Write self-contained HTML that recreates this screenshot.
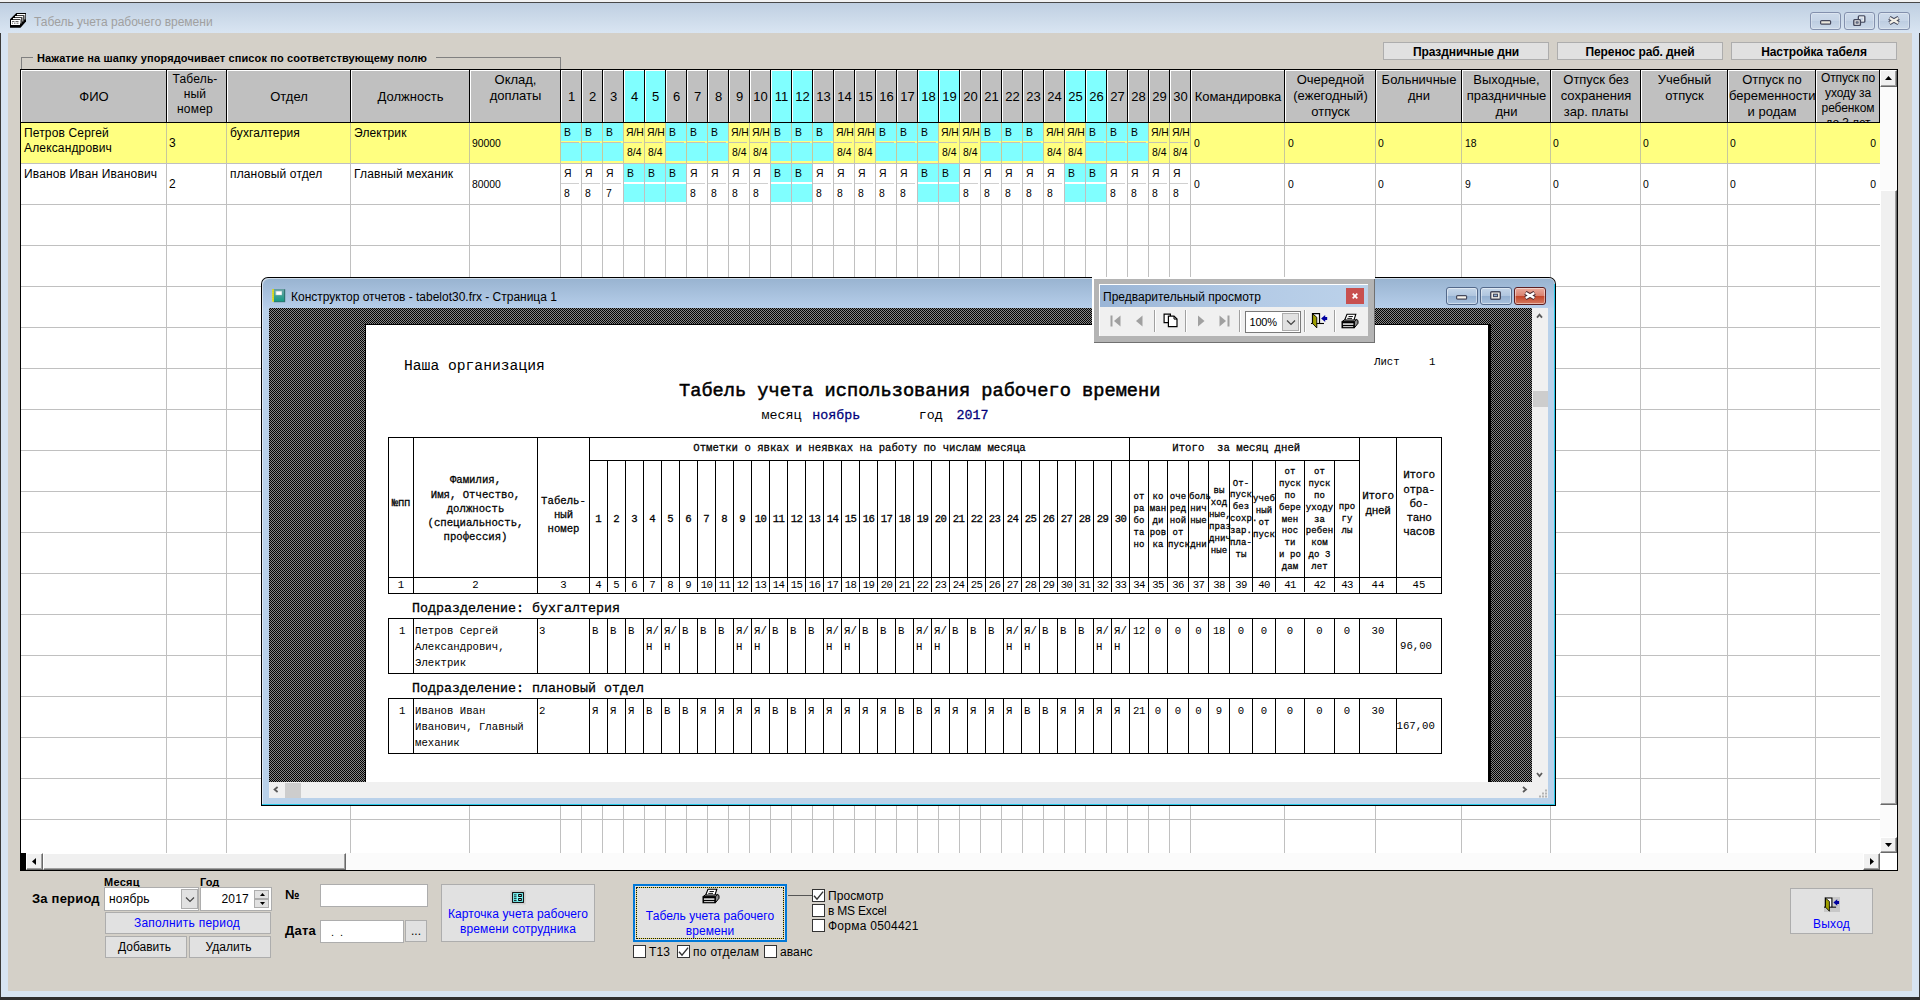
<!DOCTYPE html><html lang="ru"><head><meta charset="utf-8"><title>Табель учета рабочего времени</title><style>
*{box-sizing:border-box}
html,body{margin:0;padding:0}
body{width:1920px;height:1000px;position:relative;overflow:hidden;background:#d4d0c8;font-family:"Liberation Sans",sans-serif;font-size:12px;color:#000}
div,span,svg{position:absolute}
.t{white-space:nowrap;line-height:1}
.hd{background:#c0c0c0;border-left:1px solid #fff;border-top:1px solid #fff;text-align:center;font-size:13px;line-height:16px;overflow:hidden}
.hd span{position:static}
.cy{background:#80ffff}
.c{font-size:10.4px;white-space:nowrap;line-height:12px;margin-top:0.700px}
.c12{font-size:12px;white-space:nowrap;line-height:15px;letter-spacing:0.15px}
.btn{background:#e1e1e1;border:1px solid #adadad;text-align:center;font-size:12px}
.bl{color:#0000ff}
.cb{background:#fff;border:1px solid #333;width:13px;height:13px}
.m{font-family:"Liberation Mono",monospace;white-space:pre;line-height:1}
.m8{font-size:10.67px}
.m10{font-size:13.33px}
.b{font-weight:bold}
.m.b{font-weight:normal;-webkit-text-stroke-width:0.27px}
.ln{background:#000}
</style></head><body>
<div style="left:0px;top:0px;width:1920px;height:2px;background:#f2f2f2"></div>
<div style="left:0px;top:2px;width:1920px;height:1px;background:#484848"></div>
<div style="left:0px;top:3px;width:1920px;height:30px;background:linear-gradient(#bfcfe1,#d9e5f2)"></div>
<div style="left:0px;top:33px;width:1920px;height:967px;background:#d7e4f2"></div>
<div style="left:0px;top:33px;width:1px;height:967px;background:#3a3a3a"></div>
<div style="left:1919px;top:33px;width:1px;height:967px;background:#3a3a3a"></div>
<div style="left:0px;top:997px;width:1920px;height:3px;background:#2f2f2f"></div>
<div style="left:8px;top:33px;width:1904px;height:958px;background:#d4d0c8"></div>
<svg style="left:10px;top:13px" width="17" height="16" viewBox="0 0 17 16"><path d="M0 6.200L6.300 0H16V8.500L10.500 14.800H0z" fill="#000"/><path d="M7 0.900h8.300v5.600h-0.900v-4.200h-7.400z" fill="#fff"/><path d="M5 2.900h8.300v5.600h-0.900v-4.200h-7.400z" fill="#fff"/><path d="M3 4.900h8.300v5.600h-0.900v-4.200h-7.400z" fill="#fff"/><rect x="1" y="7" width="9" height="5" fill="#fff"/><path d="M2 8.500h2.500M5.500 8.500h3M2 10.200h1M4 10.200h1.500M6.500 10.200h2" stroke="#444" stroke-width="0.800"/></svg>
<span class="t" style="left:34px;top:16px;font-size:12px;color:#a0a0a0;letter-spacing:0px">Табель учета рабочего времени</span>
<div style="left:1810px;top:12px;width:31px;height:18px;border:1px solid #8390ad;border-radius:3px;background:linear-gradient(#cddaea,#c6d4e6 48%,#bdcde1 52%,#ccd9e9);box-shadow:inset 0 0 0 1px rgba(255,255,255,.3)"><svg style="left:9px;top:7px" width="12" height="6"><rect x="0.600" y="0.600" width="10" height="3.600" rx="1" fill="#ebe7dc" stroke="#44485c" stroke-width="1.200"/></svg></div>
<div style="left:1844px;top:12px;width:31px;height:18px;border:1px solid #8390ad;border-radius:3px;background:linear-gradient(#cddaea,#c6d4e6 48%,#bdcde1 52%,#ccd9e9);box-shadow:inset 0 0 0 1px rgba(255,255,255,.3)"><svg style="left:8px;top:2px" width="14" height="12"><rect x="5.400" y="0.900" width="6.400" height="6.200" rx="0.800" fill="#c6d4e6" stroke="#44485c" stroke-width="1.400"/><rect x="6.600" y="2.100" width="4" height="3.800" fill="none" stroke="#eee" stroke-width="1"/><rect x="0.800" y="4.600" width="6.600" height="5.800" rx="0.800" fill="#eee" stroke="#44485c" stroke-width="1.400"/><rect x="3" y="6.800" width="2.200" height="1.400" fill="#8fa0bc" stroke="#44485c" stroke-width="0.800"/></svg></div>
<div style="left:1878px;top:12px;width:32px;height:18px;border:1px solid #8390ad;border-radius:3px;background:linear-gradient(#cddaea,#c6d4e6 48%,#bdcde1 52%,#ccd9e9);box-shadow:inset 0 0 0 1px rgba(255,255,255,.3)"><svg style="left:9px;top:3px" width="13" height="10"><path d="M1.400 1.800L10.600 7.200M10.600 1.800L1.400 7.200" stroke="#44485c" stroke-width="4.300"/><path d="M1.700 2L10.300 7M10.300 2L1.700 7" stroke="#f2efe6" stroke-width="2.300"/></svg></div>
<div class="btn" style="left:1383px;top:42px;width:166px;height:18px;line-height:18.600px;overflow:hidden;font-weight:bold;font-size:12px;letter-spacing:-0.1px">Праздничные дни</div>
<div class="btn" style="left:1557px;top:42px;width:166px;height:18px;line-height:18.600px;overflow:hidden;font-weight:bold;font-size:12px;letter-spacing:-0.1px">Перенос раб. дней</div>
<div class="btn" style="left:1731px;top:42px;width:166px;height:18px;line-height:18.600px;overflow:hidden;font-weight:bold;font-size:12px;letter-spacing:-0.1px">Настройка табеля</div>
<div style="left:21px;top:57px;width:540px;height:14px;border:1px solid #808080;border-bottom:none"></div>
<span class="t" style="left:33px;top:52px;background:#d4d0c8;padding:0 9px 0 4px;font-size:11px;font-weight:bold;letter-spacing:0.11px;line-height:12px">Нажатие на шапку упорядочивает список по соответствующему полю</span>
<div style="left:20px;top:69px;width:1878px;height:802px;background:#000"></div>
<div style="left:21px;top:70px;width:1876px;height:800px;background:#fff"></div>
<div style="left:21px;top:70px;width:1859px;height:53px;background:#000"></div>
<div class="hd" style="left:21px;top:70px;width:145px;height:52px;padding-top:18px">ФИО</div>
<div class="hd" style="left:167px;top:70px;width:59px;height:52px;font-size:12px;line-height:15px;letter-spacing:0.2px;padding-right:4px;padding-top:1px">Табель-<br>ный<br>номер</div>
<div class="hd" style="left:227px;top:70px;width:123px;height:52px;padding-top:18px">Отдел</div>
<div class="hd" style="left:351px;top:70px;width:118px;height:52px;padding-top:18px">Должность</div>
<div class="hd" style="left:470px;top:70px;width:90px;height:52px;padding-top:1px">Оклад,<br>доплаты</div>
<div class="hd" style="left:561px;top:70px;width:20px;height:52px;padding-top:18px">1</div>
<div class="hd" style="left:582px;top:70px;width:20px;height:52px;padding-top:18px">2</div>
<div class="hd" style="left:603px;top:70px;width:20px;height:52px;padding-top:18px">3</div>
<div class="hd" style="left:624px;top:70px;width:20px;height:52px;background:#80ffff;padding-top:18px">4</div>
<div class="hd" style="left:645px;top:70px;width:20px;height:52px;background:#80ffff;padding-top:18px">5</div>
<div class="hd" style="left:666px;top:70px;width:20px;height:52px;padding-top:18px">6</div>
<div class="hd" style="left:687px;top:70px;width:20px;height:52px;padding-top:18px">7</div>
<div class="hd" style="left:708px;top:70px;width:20px;height:52px;padding-top:18px">8</div>
<div class="hd" style="left:729px;top:70px;width:20px;height:52px;padding-top:18px">9</div>
<div class="hd" style="left:750px;top:70px;width:20px;height:52px;padding-top:18px">10</div>
<div class="hd" style="left:771px;top:70px;width:20px;height:52px;background:#80ffff;padding-top:18px">11</div>
<div class="hd" style="left:792px;top:70px;width:20px;height:52px;background:#80ffff;padding-top:18px">12</div>
<div class="hd" style="left:813px;top:70px;width:20px;height:52px;padding-top:18px">13</div>
<div class="hd" style="left:834px;top:70px;width:20px;height:52px;padding-top:18px">14</div>
<div class="hd" style="left:855px;top:70px;width:20px;height:52px;padding-top:18px">15</div>
<div class="hd" style="left:876px;top:70px;width:20px;height:52px;padding-top:18px">16</div>
<div class="hd" style="left:897px;top:70px;width:20px;height:52px;padding-top:18px">17</div>
<div class="hd" style="left:918px;top:70px;width:20px;height:52px;background:#80ffff;padding-top:18px">18</div>
<div class="hd" style="left:939px;top:70px;width:20px;height:52px;background:#80ffff;padding-top:18px">19</div>
<div class="hd" style="left:960px;top:70px;width:20px;height:52px;padding-top:18px">20</div>
<div class="hd" style="left:981px;top:70px;width:20px;height:52px;padding-top:18px">21</div>
<div class="hd" style="left:1002px;top:70px;width:20px;height:52px;padding-top:18px">22</div>
<div class="hd" style="left:1023px;top:70px;width:20px;height:52px;padding-top:18px">23</div>
<div class="hd" style="left:1044px;top:70px;width:20px;height:52px;padding-top:18px">24</div>
<div class="hd" style="left:1065px;top:70px;width:20px;height:52px;background:#80ffff;padding-top:18px">25</div>
<div class="hd" style="left:1086px;top:70px;width:20px;height:52px;background:#80ffff;padding-top:18px">26</div>
<div class="hd" style="left:1107px;top:70px;width:20px;height:52px;padding-top:18px">27</div>
<div class="hd" style="left:1128px;top:70px;width:20px;height:52px;padding-top:18px">28</div>
<div class="hd" style="left:1149px;top:70px;width:20px;height:52px;padding-top:18px">29</div>
<div class="hd" style="left:1170px;top:70px;width:20px;height:52px;padding-top:18px">30</div>
<div class="hd" style="left:1191px;top:70px;width:93px;height:52px;letter-spacing:-0.1px;padding-top:18px">Командировка</div>
<div class="hd" style="left:1285px;top:70px;width:90px;height:52px;padding-top:1px">Очередной<br>(ежегодный)<br>отпуск</div>
<div class="hd" style="left:1376px;top:70px;width:85px;height:52px;padding-top:1px">Больничные<br>дни</div>
<div class="hd" style="left:1462px;top:70px;width:88px;height:52px;padding-top:1px">Выходные,<br>праздничные<br>дни</div>
<div class="hd" style="left:1551px;top:70px;width:89px;height:52px;padding-top:1px">Отпуск без<br>сохранения<br>зар. платы</div>
<div class="hd" style="left:1641px;top:70px;width:86px;height:52px;padding-top:1px">Учебный<br>отпуск</div>
<div class="hd" style="left:1728px;top:70px;width:87px;height:52px;padding-top:1px">Отпуск по<br>беременности<br>и родам</div>
<div class="hd" style="left:1816px;top:70px;width:63px;height:52px;font-size:12px;line-height:15px;letter-spacing:-0.1px;padding-top:0px">Отпуск по<br>уходу за<br>ребенком<br>до 3 лет</div>
<div style="left:166px;top:123px;width:1px;height:730px;background:#c0c0c0"></div>
<div style="left:226px;top:123px;width:1px;height:730px;background:#c0c0c0"></div>
<div style="left:350px;top:123px;width:1px;height:730px;background:#c0c0c0"></div>
<div style="left:469px;top:123px;width:1px;height:730px;background:#c0c0c0"></div>
<div style="left:560px;top:123px;width:1px;height:730px;background:#c0c0c0"></div>
<div style="left:581px;top:123px;width:1px;height:730px;background:#c0c0c0"></div>
<div style="left:602px;top:123px;width:1px;height:730px;background:#c0c0c0"></div>
<div style="left:623px;top:123px;width:1px;height:730px;background:#c0c0c0"></div>
<div style="left:644px;top:123px;width:1px;height:730px;background:#c0c0c0"></div>
<div style="left:665px;top:123px;width:1px;height:730px;background:#c0c0c0"></div>
<div style="left:686px;top:123px;width:1px;height:730px;background:#c0c0c0"></div>
<div style="left:707px;top:123px;width:1px;height:730px;background:#c0c0c0"></div>
<div style="left:728px;top:123px;width:1px;height:730px;background:#c0c0c0"></div>
<div style="left:749px;top:123px;width:1px;height:730px;background:#c0c0c0"></div>
<div style="left:770px;top:123px;width:1px;height:730px;background:#c0c0c0"></div>
<div style="left:791px;top:123px;width:1px;height:730px;background:#c0c0c0"></div>
<div style="left:812px;top:123px;width:1px;height:730px;background:#c0c0c0"></div>
<div style="left:833px;top:123px;width:1px;height:730px;background:#c0c0c0"></div>
<div style="left:854px;top:123px;width:1px;height:730px;background:#c0c0c0"></div>
<div style="left:875px;top:123px;width:1px;height:730px;background:#c0c0c0"></div>
<div style="left:896px;top:123px;width:1px;height:730px;background:#c0c0c0"></div>
<div style="left:917px;top:123px;width:1px;height:730px;background:#c0c0c0"></div>
<div style="left:938px;top:123px;width:1px;height:730px;background:#c0c0c0"></div>
<div style="left:959px;top:123px;width:1px;height:730px;background:#c0c0c0"></div>
<div style="left:980px;top:123px;width:1px;height:730px;background:#c0c0c0"></div>
<div style="left:1001px;top:123px;width:1px;height:730px;background:#c0c0c0"></div>
<div style="left:1022px;top:123px;width:1px;height:730px;background:#c0c0c0"></div>
<div style="left:1043px;top:123px;width:1px;height:730px;background:#c0c0c0"></div>
<div style="left:1064px;top:123px;width:1px;height:730px;background:#c0c0c0"></div>
<div style="left:1085px;top:123px;width:1px;height:730px;background:#c0c0c0"></div>
<div style="left:1106px;top:123px;width:1px;height:730px;background:#c0c0c0"></div>
<div style="left:1127px;top:123px;width:1px;height:730px;background:#c0c0c0"></div>
<div style="left:1148px;top:123px;width:1px;height:730px;background:#c0c0c0"></div>
<div style="left:1169px;top:123px;width:1px;height:730px;background:#c0c0c0"></div>
<div style="left:1190px;top:123px;width:1px;height:730px;background:#c0c0c0"></div>
<div style="left:1284px;top:123px;width:1px;height:730px;background:#c0c0c0"></div>
<div style="left:1375px;top:123px;width:1px;height:730px;background:#c0c0c0"></div>
<div style="left:1461px;top:123px;width:1px;height:730px;background:#c0c0c0"></div>
<div style="left:1550px;top:123px;width:1px;height:730px;background:#c0c0c0"></div>
<div style="left:1640px;top:123px;width:1px;height:730px;background:#c0c0c0"></div>
<div style="left:1727px;top:123px;width:1px;height:730px;background:#c0c0c0"></div>
<div style="left:1815px;top:123px;width:1px;height:730px;background:#c0c0c0"></div>
<div style="left:21px;top:163px;width:1859px;height:1px;background:#c0c0c0"></div>
<div style="left:21px;top:204px;width:1859px;height:1px;background:#c0c0c0"></div>
<div style="left:21px;top:245px;width:1859px;height:1px;background:#c0c0c0"></div>
<div style="left:21px;top:286px;width:1859px;height:1px;background:#c0c0c0"></div>
<div style="left:21px;top:327px;width:1859px;height:1px;background:#c0c0c0"></div>
<div style="left:21px;top:368px;width:1859px;height:1px;background:#c0c0c0"></div>
<div style="left:21px;top:409px;width:1859px;height:1px;background:#c0c0c0"></div>
<div style="left:21px;top:450px;width:1859px;height:1px;background:#c0c0c0"></div>
<div style="left:21px;top:491px;width:1859px;height:1px;background:#c0c0c0"></div>
<div style="left:21px;top:532px;width:1859px;height:1px;background:#c0c0c0"></div>
<div style="left:21px;top:573px;width:1859px;height:1px;background:#c0c0c0"></div>
<div style="left:21px;top:614px;width:1859px;height:1px;background:#c0c0c0"></div>
<div style="left:21px;top:655px;width:1859px;height:1px;background:#c0c0c0"></div>
<div style="left:21px;top:696px;width:1859px;height:1px;background:#c0c0c0"></div>
<div style="left:21px;top:737px;width:1859px;height:1px;background:#c0c0c0"></div>
<div style="left:21px;top:778px;width:1859px;height:1px;background:#c0c0c0"></div>
<div style="left:21px;top:819px;width:1859px;height:1px;background:#c0c0c0"></div>
<div style="left:21px;top:123px;width:1859px;height:40px;background:#ffff80"></div>
<div style="left:166px;top:123px;width:1px;height:40px;background:#c8c89a"></div>
<div style="left:226px;top:123px;width:1px;height:40px;background:#c8c89a"></div>
<div style="left:350px;top:123px;width:1px;height:40px;background:#c8c89a"></div>
<div style="left:469px;top:123px;width:1px;height:40px;background:#c8c89a"></div>
<div style="left:560px;top:123px;width:1px;height:40px;background:#c8c89a"></div>
<div style="left:581px;top:123px;width:1px;height:40px;background:#c8c89a"></div>
<div style="left:602px;top:123px;width:1px;height:40px;background:#c8c89a"></div>
<div style="left:623px;top:123px;width:1px;height:40px;background:#c8c89a"></div>
<div style="left:644px;top:123px;width:1px;height:40px;background:#c8c89a"></div>
<div style="left:665px;top:123px;width:1px;height:40px;background:#c8c89a"></div>
<div style="left:686px;top:123px;width:1px;height:40px;background:#c8c89a"></div>
<div style="left:707px;top:123px;width:1px;height:40px;background:#c8c89a"></div>
<div style="left:728px;top:123px;width:1px;height:40px;background:#c8c89a"></div>
<div style="left:749px;top:123px;width:1px;height:40px;background:#c8c89a"></div>
<div style="left:770px;top:123px;width:1px;height:40px;background:#c8c89a"></div>
<div style="left:791px;top:123px;width:1px;height:40px;background:#c8c89a"></div>
<div style="left:812px;top:123px;width:1px;height:40px;background:#c8c89a"></div>
<div style="left:833px;top:123px;width:1px;height:40px;background:#c8c89a"></div>
<div style="left:854px;top:123px;width:1px;height:40px;background:#c8c89a"></div>
<div style="left:875px;top:123px;width:1px;height:40px;background:#c8c89a"></div>
<div style="left:896px;top:123px;width:1px;height:40px;background:#c8c89a"></div>
<div style="left:917px;top:123px;width:1px;height:40px;background:#c8c89a"></div>
<div style="left:938px;top:123px;width:1px;height:40px;background:#c8c89a"></div>
<div style="left:959px;top:123px;width:1px;height:40px;background:#c8c89a"></div>
<div style="left:980px;top:123px;width:1px;height:40px;background:#c8c89a"></div>
<div style="left:1001px;top:123px;width:1px;height:40px;background:#c8c89a"></div>
<div style="left:1022px;top:123px;width:1px;height:40px;background:#c8c89a"></div>
<div style="left:1043px;top:123px;width:1px;height:40px;background:#c8c89a"></div>
<div style="left:1064px;top:123px;width:1px;height:40px;background:#c8c89a"></div>
<div style="left:1085px;top:123px;width:1px;height:40px;background:#c8c89a"></div>
<div style="left:1106px;top:123px;width:1px;height:40px;background:#c8c89a"></div>
<div style="left:1127px;top:123px;width:1px;height:40px;background:#c8c89a"></div>
<div style="left:1148px;top:123px;width:1px;height:40px;background:#c8c89a"></div>
<div style="left:1169px;top:123px;width:1px;height:40px;background:#c8c89a"></div>
<div style="left:1190px;top:123px;width:1px;height:40px;background:#c8c89a"></div>
<div style="left:1284px;top:123px;width:1px;height:40px;background:#c8c89a"></div>
<div style="left:1375px;top:123px;width:1px;height:40px;background:#c8c89a"></div>
<div style="left:1461px;top:123px;width:1px;height:40px;background:#c8c89a"></div>
<div style="left:1550px;top:123px;width:1px;height:40px;background:#c8c89a"></div>
<div style="left:1640px;top:123px;width:1px;height:40px;background:#c8c89a"></div>
<div style="left:1727px;top:123px;width:1px;height:40px;background:#c8c89a"></div>
<div style="left:1815px;top:123px;width:1px;height:40px;background:#c8c89a"></div>
<div style="left:561px;top:123px;width:20px;height:18px;background:#80ffff"></div>
<div style="left:561px;top:143px;width:20px;height:18px;background:#80ffff"></div>
<div style="left:561px;top:142px;width:18px;height:1px;background:#c4c4b4"></div>
<span class="c" style="left:564px;top:126px;">В</span>
<div style="left:582px;top:123px;width:20px;height:18px;background:#80ffff"></div>
<div style="left:582px;top:143px;width:20px;height:18px;background:#80ffff"></div>
<div style="left:582px;top:142px;width:18px;height:1px;background:#c4c4b4"></div>
<span class="c" style="left:585px;top:126px;">В</span>
<div style="left:603px;top:123px;width:20px;height:18px;background:#80ffff"></div>
<div style="left:603px;top:143px;width:20px;height:18px;background:#80ffff"></div>
<div style="left:603px;top:142px;width:18px;height:1px;background:#c4c4b4"></div>
<span class="c" style="left:606px;top:126px;">В</span>
<div style="left:624px;top:142px;width:18px;height:1px;background:#c4c4b4"></div>
<span class="c" style="left:626px;top:126px;letter-spacing:-0.1px;">Я/Н</span>
<span class="c" style="left:627px;top:146px;">8/4</span>
<div style="left:645px;top:142px;width:18px;height:1px;background:#c4c4b4"></div>
<span class="c" style="left:647px;top:126px;letter-spacing:-0.1px;">Я/Н</span>
<span class="c" style="left:648px;top:146px;">8/4</span>
<div style="left:666px;top:123px;width:20px;height:18px;background:#80ffff"></div>
<div style="left:666px;top:143px;width:20px;height:18px;background:#80ffff"></div>
<div style="left:666px;top:142px;width:18px;height:1px;background:#c4c4b4"></div>
<span class="c" style="left:669px;top:126px;">В</span>
<div style="left:687px;top:123px;width:20px;height:18px;background:#80ffff"></div>
<div style="left:687px;top:143px;width:20px;height:18px;background:#80ffff"></div>
<div style="left:687px;top:142px;width:18px;height:1px;background:#c4c4b4"></div>
<span class="c" style="left:690px;top:126px;">В</span>
<div style="left:708px;top:123px;width:20px;height:18px;background:#80ffff"></div>
<div style="left:708px;top:143px;width:20px;height:18px;background:#80ffff"></div>
<div style="left:708px;top:142px;width:18px;height:1px;background:#c4c4b4"></div>
<span class="c" style="left:711px;top:126px;">В</span>
<div style="left:729px;top:142px;width:18px;height:1px;background:#c4c4b4"></div>
<span class="c" style="left:731px;top:126px;letter-spacing:-0.1px;">Я/Н</span>
<span class="c" style="left:732px;top:146px;">8/4</span>
<div style="left:750px;top:142px;width:18px;height:1px;background:#c4c4b4"></div>
<span class="c" style="left:752px;top:126px;letter-spacing:-0.1px;">Я/Н</span>
<span class="c" style="left:753px;top:146px;">8/4</span>
<div style="left:771px;top:123px;width:20px;height:18px;background:#80ffff"></div>
<div style="left:771px;top:143px;width:20px;height:18px;background:#80ffff"></div>
<div style="left:771px;top:142px;width:18px;height:1px;background:#c4c4b4"></div>
<span class="c" style="left:774px;top:126px;">В</span>
<div style="left:792px;top:123px;width:20px;height:18px;background:#80ffff"></div>
<div style="left:792px;top:143px;width:20px;height:18px;background:#80ffff"></div>
<div style="left:792px;top:142px;width:18px;height:1px;background:#c4c4b4"></div>
<span class="c" style="left:795px;top:126px;">В</span>
<div style="left:813px;top:123px;width:20px;height:18px;background:#80ffff"></div>
<div style="left:813px;top:143px;width:20px;height:18px;background:#80ffff"></div>
<div style="left:813px;top:142px;width:18px;height:1px;background:#c4c4b4"></div>
<span class="c" style="left:816px;top:126px;">В</span>
<div style="left:834px;top:142px;width:18px;height:1px;background:#c4c4b4"></div>
<span class="c" style="left:836px;top:126px;letter-spacing:-0.1px;">Я/Н</span>
<span class="c" style="left:837px;top:146px;">8/4</span>
<div style="left:855px;top:142px;width:18px;height:1px;background:#c4c4b4"></div>
<span class="c" style="left:857px;top:126px;letter-spacing:-0.1px;">Я/Н</span>
<span class="c" style="left:858px;top:146px;">8/4</span>
<div style="left:876px;top:123px;width:20px;height:18px;background:#80ffff"></div>
<div style="left:876px;top:143px;width:20px;height:18px;background:#80ffff"></div>
<div style="left:876px;top:142px;width:18px;height:1px;background:#c4c4b4"></div>
<span class="c" style="left:879px;top:126px;">В</span>
<div style="left:897px;top:123px;width:20px;height:18px;background:#80ffff"></div>
<div style="left:897px;top:143px;width:20px;height:18px;background:#80ffff"></div>
<div style="left:897px;top:142px;width:18px;height:1px;background:#c4c4b4"></div>
<span class="c" style="left:900px;top:126px;">В</span>
<div style="left:918px;top:123px;width:20px;height:18px;background:#80ffff"></div>
<div style="left:918px;top:143px;width:20px;height:18px;background:#80ffff"></div>
<div style="left:918px;top:142px;width:18px;height:1px;background:#c4c4b4"></div>
<span class="c" style="left:921px;top:126px;">В</span>
<div style="left:939px;top:142px;width:18px;height:1px;background:#c4c4b4"></div>
<span class="c" style="left:941px;top:126px;letter-spacing:-0.1px;">Я/Н</span>
<span class="c" style="left:942px;top:146px;">8/4</span>
<div style="left:960px;top:142px;width:18px;height:1px;background:#c4c4b4"></div>
<span class="c" style="left:962px;top:126px;letter-spacing:-0.1px;">Я/Н</span>
<span class="c" style="left:963px;top:146px;">8/4</span>
<div style="left:981px;top:123px;width:20px;height:18px;background:#80ffff"></div>
<div style="left:981px;top:143px;width:20px;height:18px;background:#80ffff"></div>
<div style="left:981px;top:142px;width:18px;height:1px;background:#c4c4b4"></div>
<span class="c" style="left:984px;top:126px;">В</span>
<div style="left:1002px;top:123px;width:20px;height:18px;background:#80ffff"></div>
<div style="left:1002px;top:143px;width:20px;height:18px;background:#80ffff"></div>
<div style="left:1002px;top:142px;width:18px;height:1px;background:#c4c4b4"></div>
<span class="c" style="left:1005px;top:126px;">В</span>
<div style="left:1023px;top:123px;width:20px;height:18px;background:#80ffff"></div>
<div style="left:1023px;top:143px;width:20px;height:18px;background:#80ffff"></div>
<div style="left:1023px;top:142px;width:18px;height:1px;background:#c4c4b4"></div>
<span class="c" style="left:1026px;top:126px;">В</span>
<div style="left:1044px;top:142px;width:18px;height:1px;background:#c4c4b4"></div>
<span class="c" style="left:1046px;top:126px;letter-spacing:-0.1px;">Я/Н</span>
<span class="c" style="left:1047px;top:146px;">8/4</span>
<div style="left:1065px;top:142px;width:18px;height:1px;background:#c4c4b4"></div>
<span class="c" style="left:1067px;top:126px;letter-spacing:-0.1px;">Я/Н</span>
<span class="c" style="left:1068px;top:146px;">8/4</span>
<div style="left:1086px;top:123px;width:20px;height:18px;background:#80ffff"></div>
<div style="left:1086px;top:143px;width:20px;height:18px;background:#80ffff"></div>
<div style="left:1086px;top:142px;width:18px;height:1px;background:#c4c4b4"></div>
<span class="c" style="left:1089px;top:126px;">В</span>
<div style="left:1107px;top:123px;width:20px;height:18px;background:#80ffff"></div>
<div style="left:1107px;top:143px;width:20px;height:18px;background:#80ffff"></div>
<div style="left:1107px;top:142px;width:18px;height:1px;background:#c4c4b4"></div>
<span class="c" style="left:1110px;top:126px;">В</span>
<div style="left:1128px;top:123px;width:20px;height:18px;background:#80ffff"></div>
<div style="left:1128px;top:143px;width:20px;height:18px;background:#80ffff"></div>
<div style="left:1128px;top:142px;width:18px;height:1px;background:#c4c4b4"></div>
<span class="c" style="left:1131px;top:126px;">В</span>
<div style="left:1149px;top:142px;width:18px;height:1px;background:#c4c4b4"></div>
<span class="c" style="left:1151px;top:126px;letter-spacing:-0.1px;">Я/Н</span>
<span class="c" style="left:1152px;top:146px;">8/4</span>
<div style="left:1170px;top:142px;width:18px;height:1px;background:#c4c4b4"></div>
<span class="c" style="left:1172px;top:126px;letter-spacing:-0.1px;">Я/Н</span>
<span class="c" style="left:1173px;top:146px;">8/4</span>
<div style="left:561px;top:183px;width:18px;height:1px;background:#d0d0d0"></div>
<span class="c" style="left:564px;top:167px;">Я</span>
<span class="c" style="left:564px;top:187px;">8</span>
<div style="left:582px;top:183px;width:18px;height:1px;background:#d0d0d0"></div>
<span class="c" style="left:585px;top:167px;">Я</span>
<span class="c" style="left:585px;top:187px;">8</span>
<div style="left:603px;top:183px;width:18px;height:1px;background:#d0d0d0"></div>
<span class="c" style="left:606px;top:167px;">Я</span>
<span class="c" style="left:606px;top:187px;">7</span>
<div style="left:624px;top:164px;width:20px;height:18px;background:#80ffff"></div>
<div style="left:624px;top:184px;width:20px;height:18px;background:#80ffff"></div>
<span class="c" style="left:627px;top:167px;">В</span>
<div style="left:645px;top:164px;width:20px;height:18px;background:#80ffff"></div>
<div style="left:645px;top:184px;width:20px;height:18px;background:#80ffff"></div>
<span class="c" style="left:648px;top:167px;">В</span>
<div style="left:666px;top:164px;width:20px;height:18px;background:#80ffff"></div>
<div style="left:666px;top:184px;width:20px;height:18px;background:#80ffff"></div>
<span class="c" style="left:669px;top:167px;">В</span>
<div style="left:687px;top:183px;width:18px;height:1px;background:#d0d0d0"></div>
<span class="c" style="left:690px;top:167px;">Я</span>
<span class="c" style="left:690px;top:187px;">8</span>
<div style="left:708px;top:183px;width:18px;height:1px;background:#d0d0d0"></div>
<span class="c" style="left:711px;top:167px;">Я</span>
<span class="c" style="left:711px;top:187px;">8</span>
<div style="left:729px;top:183px;width:18px;height:1px;background:#d0d0d0"></div>
<span class="c" style="left:732px;top:167px;">Я</span>
<span class="c" style="left:732px;top:187px;">8</span>
<div style="left:750px;top:183px;width:18px;height:1px;background:#d0d0d0"></div>
<span class="c" style="left:753px;top:167px;">Я</span>
<span class="c" style="left:753px;top:187px;">8</span>
<div style="left:771px;top:164px;width:20px;height:18px;background:#80ffff"></div>
<div style="left:771px;top:184px;width:20px;height:18px;background:#80ffff"></div>
<span class="c" style="left:774px;top:167px;">В</span>
<div style="left:792px;top:164px;width:20px;height:18px;background:#80ffff"></div>
<div style="left:792px;top:184px;width:20px;height:18px;background:#80ffff"></div>
<span class="c" style="left:795px;top:167px;">В</span>
<div style="left:813px;top:183px;width:18px;height:1px;background:#d0d0d0"></div>
<span class="c" style="left:816px;top:167px;">Я</span>
<span class="c" style="left:816px;top:187px;">8</span>
<div style="left:834px;top:183px;width:18px;height:1px;background:#d0d0d0"></div>
<span class="c" style="left:837px;top:167px;">Я</span>
<span class="c" style="left:837px;top:187px;">8</span>
<div style="left:855px;top:183px;width:18px;height:1px;background:#d0d0d0"></div>
<span class="c" style="left:858px;top:167px;">Я</span>
<span class="c" style="left:858px;top:187px;">8</span>
<div style="left:876px;top:183px;width:18px;height:1px;background:#d0d0d0"></div>
<span class="c" style="left:879px;top:167px;">Я</span>
<span class="c" style="left:879px;top:187px;">8</span>
<div style="left:897px;top:183px;width:18px;height:1px;background:#d0d0d0"></div>
<span class="c" style="left:900px;top:167px;">Я</span>
<span class="c" style="left:900px;top:187px;">8</span>
<div style="left:918px;top:164px;width:20px;height:18px;background:#80ffff"></div>
<div style="left:918px;top:184px;width:20px;height:18px;background:#80ffff"></div>
<span class="c" style="left:921px;top:167px;">В</span>
<div style="left:939px;top:164px;width:20px;height:18px;background:#80ffff"></div>
<div style="left:939px;top:184px;width:20px;height:18px;background:#80ffff"></div>
<span class="c" style="left:942px;top:167px;">В</span>
<div style="left:960px;top:183px;width:18px;height:1px;background:#d0d0d0"></div>
<span class="c" style="left:963px;top:167px;">Я</span>
<span class="c" style="left:963px;top:187px;">8</span>
<div style="left:981px;top:183px;width:18px;height:1px;background:#d0d0d0"></div>
<span class="c" style="left:984px;top:167px;">Я</span>
<span class="c" style="left:984px;top:187px;">8</span>
<div style="left:1002px;top:183px;width:18px;height:1px;background:#d0d0d0"></div>
<span class="c" style="left:1005px;top:167px;">Я</span>
<span class="c" style="left:1005px;top:187px;">8</span>
<div style="left:1023px;top:183px;width:18px;height:1px;background:#d0d0d0"></div>
<span class="c" style="left:1026px;top:167px;">Я</span>
<span class="c" style="left:1026px;top:187px;">8</span>
<div style="left:1044px;top:183px;width:18px;height:1px;background:#d0d0d0"></div>
<span class="c" style="left:1047px;top:167px;">Я</span>
<span class="c" style="left:1047px;top:187px;">8</span>
<div style="left:1065px;top:164px;width:20px;height:18px;background:#80ffff"></div>
<div style="left:1065px;top:184px;width:20px;height:18px;background:#80ffff"></div>
<span class="c" style="left:1068px;top:167px;">В</span>
<div style="left:1086px;top:164px;width:20px;height:18px;background:#80ffff"></div>
<div style="left:1086px;top:184px;width:20px;height:18px;background:#80ffff"></div>
<span class="c" style="left:1089px;top:167px;">В</span>
<div style="left:1107px;top:183px;width:18px;height:1px;background:#d0d0d0"></div>
<span class="c" style="left:1110px;top:167px;">Я</span>
<span class="c" style="left:1110px;top:187px;">8</span>
<div style="left:1128px;top:183px;width:18px;height:1px;background:#d0d0d0"></div>
<span class="c" style="left:1131px;top:167px;">Я</span>
<span class="c" style="left:1131px;top:187px;">8</span>
<div style="left:1149px;top:183px;width:18px;height:1px;background:#d0d0d0"></div>
<span class="c" style="left:1152px;top:167px;">Я</span>
<span class="c" style="left:1152px;top:187px;">8</span>
<div style="left:1170px;top:183px;width:18px;height:1px;background:#d0d0d0"></div>
<span class="c" style="left:1173px;top:167px;">Я</span>
<span class="c" style="left:1173px;top:187px;">8</span>
<span class="c12" style="left:24px;top:126px;white-space:normal;width:140px">Петров Сергей Александрович</span>
<span class="c12" style="left:169px;top:136px">3</span>
<span class="c12" style="left:230px;top:126px">бухгалтерия</span>
<span class="c12" style="left:354px;top:126px">Электрик</span>
<span class="c" style="left:472px;top:137px">90000</span>
<span class="c" style="left:1194px;top:137px">0</span>
<span class="c" style="left:1288px;top:137px">0</span>
<span class="c" style="left:1378px;top:137px">0</span>
<span class="c" style="left:1465px;top:137px">18</span>
<span class="c" style="left:1553px;top:137px">0</span>
<span class="c" style="left:1643px;top:137px">0</span>
<span class="c" style="left:1730px;top:137px">0</span>
<span class="c" style="left:1866px;top:137px;width:10px;text-align:right">0</span>
<span class="c12" style="left:24px;top:167px;white-space:normal;width:140px">Иванов Иван Иванович</span>
<span class="c12" style="left:169px;top:177px">2</span>
<span class="c12" style="left:230px;top:167px">плановый отдел</span>
<span class="c12" style="left:354px;top:167px">Главный механик</span>
<span class="c" style="left:472px;top:178px">80000</span>
<span class="c" style="left:1194px;top:178px">0</span>
<span class="c" style="left:1288px;top:178px">0</span>
<span class="c" style="left:1378px;top:178px">0</span>
<span class="c" style="left:1465px;top:178px">9</span>
<span class="c" style="left:1553px;top:178px">0</span>
<span class="c" style="left:1643px;top:178px">0</span>
<span class="c" style="left:1730px;top:178px">0</span>
<span class="c" style="left:1866px;top:178px;width:10px;text-align:right">0</span>
<div style="left:1880px;top:70px;width:17px;height:783px;background:#fbfbfb"></div>
<div style="left:1880px;top:70px;width:17px;height:17px;background:#f0f0f0;border:1px solid #fff;border-right-color:#696969;border-bottom-color:#696969;box-shadow:inset -1px -1px 0 #a0a0a0"><svg style="left:4px;top:5px" width="7" height="4"><path d="M0 4L3.500 0L7 4z" fill="#000"/></svg></div>
<div style="left:1880px;top:190px;width:17px;height:615px;background:#f0f0f0;border:1px solid #fff;border-right-color:#696969;border-bottom-color:#696969;box-shadow:inset -1px -1px 0 #a0a0a0"></div>
<div style="left:1880px;top:837px;width:17px;height:16px;background:#f0f0f0;border:1px solid #fff;border-right-color:#696969;border-bottom-color:#696969;box-shadow:inset -1px -1px 0 #a0a0a0"><svg style="left:4px;top:5px" width="7" height="4"><path d="M0 0L3.500 4L7 0z" fill="#000"/></svg></div>
<div style="left:21px;top:853px;width:1859px;height:17px;background:#fbfbfb"></div>
<div style="left:20px;top:853px;width:6px;height:17px;background:#000"></div>
<div style="left:26px;top:853px;width:17px;height:17px;background:#f0f0f0;border:1px solid #fff;border-right-color:#696969;border-bottom-color:#696969;box-shadow:inset -1px -1px 0 #a0a0a0"><svg style="left:5px;top:4px" width="4" height="7"><path d="M4 0L0 3.500L4 7z" fill="#000"/></svg></div>
<div style="left:43px;top:853px;width:303px;height:17px;background:#f0f0f0;border:1px solid #fff;border-right-color:#696969;border-bottom-color:#696969;box-shadow:inset -1px -1px 0 #a0a0a0"></div>
<div style="left:1863px;top:853px;width:17px;height:17px;background:#f0f0f0;border:1px solid #fff;border-right-color:#696969;border-bottom-color:#696969;box-shadow:inset -1px -1px 0 #a0a0a0"><svg style="left:6px;top:4px" width="4" height="7"><path d="M0 0L4 3.500L0 7z" fill="#000"/></svg></div>
<div style="left:1880px;top:853px;width:17px;height:17px;background:#fff"></div>
<span class="t b" style="left:104px;top:877px;font-size:11px;letter-spacing:0.25px">Месяц</span>
<span class="t b" style="left:200px;top:877px;font-size:11px">Год</span>
<span class="t b" style="left:32px;top:892px;font-size:13px;letter-spacing:0.2px">За период</span>
<div style="left:104px;top:887px;width:95px;height:24px;background:#fff;border:1px solid #adadad"></div>
<span class="t" style="left:109px;top:893px;font-size:12px;letter-spacing:0.2px">ноябрь</span>
<div style="left:181px;top:889px;width:17px;height:20px;background:#e1e1e1;border:1px solid #adadad"><svg style="left:3px;top:6px" width="10" height="7"><path d="M1 1.500L5 5.500L9 1.500" fill="none" stroke="#444" stroke-width="1.200"/></svg></div>
<div style="left:200px;top:887px;width:72px;height:24px;background:#fff;border:1px solid #adadad"></div>
<span class="t" style="left:215px;top:893px;font-size:12px;width:34px;text-align:right;letter-spacing:0.2px">2017</span>
<div style="left:254px;top:890px;width:15px;height:9px;background:#e1e1e1;border:1px solid #adadad"><svg style="left:5px;top:2px" width="5" height="3"><path d="M0 3L2.500 0L5 3z" fill="#000"/></svg></div>
<div style="left:254px;top:899px;width:15px;height:9px;background:#e1e1e1;border:1px solid #adadad"><svg style="left:5px;top:2px" width="5" height="3"><path d="M0 0L2.500 3L5 0z" fill="#000"/></svg></div>
<div class="btn bl" style="left:105px;top:912px;width:166px;height:22px;line-height:20px;letter-spacing:0.25px;padding-right:2px">Заполнить период</div>
<div class="btn" style="left:105px;top:936px;width:82px;height:22px;line-height:20px;letter-spacing:0px;padding-right:3px">Добавить</div>
<div class="btn" style="left:189px;top:936px;width:82px;height:22px;line-height:20px;letter-spacing:0.05px;padding-right:3px">Удалить</div>
<span class="t b" style="left:285px;top:888px;font-size:13px">№</span>
<span class="t b" style="left:285px;top:924px;font-size:13px;letter-spacing:0.2px">Дата</span>
<div style="left:320px;top:884px;width:108px;height:23px;background:#fff;border:1px solid #adadad"></div>
<div style="left:320px;top:920px;width:84px;height:23px;background:#fff;border:1px solid #adadad"></div>
<span class="t" style="left:331px;top:927px;font-size:11px;letter-spacing:6px">..</span>
<div class="btn" style="left:405px;top:920px;width:22px;height:22px;line-height:20px">...</div>
<div class="btn" style="left:441px;top:884px;width:154px;height:58px;"></div>
<svg style="left:510px;top:890px" width="16" height="15" viewBox="0 0 16 15"><rect x="0.400" y="0.400" width="15.200" height="14.100" fill="#cdcdcd"/><rect x="2.100" y="2.100" width="11.800" height="10.800" fill="#000"/><rect x="3.100" y="3.100" width="9.800" height="8.800" fill="#80ffff"/><path d="M4 4.900h2.600M4 6.800h2.600M4 8.700h2.600M4 10.600h2.600" stroke="#000" stroke-width="0.900"/><rect x="8.200" y="4" width="3.600" height="2.900" rx="0.500" fill="#000"/><rect x="9.200" y="5" width="1.600" height="0.900" fill="#fff"/><rect x="8.200" y="8" width="3.600" height="2.900" rx="0.500" fill="#000"/><rect x="9.200" y="9" width="1.600" height="0.900" fill="#fff"/></svg>
<span class="bl" style="left:441px;top:906.700px;width:154px;text-align:center;font-size:12px;line-height:15px;letter-spacing:0.1px">Карточка учета рабочего<br>времени сотрудника</span>
<div style="left:633px;top:884px;width:154px;height:58px;background:#e1e1e1;border:2px solid #0078d7"></div>
<div style="left:636px;top:887px;width:148px;height:52px;border:1px solid #e6de50"></div>
<div style="left:636px;top:887px;width:148px;height:52px;border:1px dotted #111"></div>
<svg style="left:702px;top:888px" width="18" height="16" viewBox="0 0 18 16"><path d="M13.300 8.700L15.400 6.300L17 7.500v2.800l-3.700 4.600z" fill="#8c8c8c" stroke="#000" stroke-width="1"/><path d="M0.900 8.700L3.300 6.900H15.400L13.300 8.700z" fill="#f4f4f4" stroke="#000" stroke-width="1"/><rect x="0.500" y="8.300" width="13.200" height="7" fill="#000"/><rect x="1.900" y="10.300" width="10.500" height="1.600" fill="#e4e4e4"/><rect x="2.100" y="13.200" width="10.100" height="0.900" fill="#f4f4f4"/><path d="M3.700 7L6 1.200h8.800L13 7z" fill="#fff" stroke="#000" stroke-width="1.100"/><path d="M7.500 3.500h4.400M6.300 5.400h4.700" stroke="#000" stroke-width="0.900"/></svg>
<span class="bl" style="left:633px;top:908.700px;width:154px;text-align:center;font-size:12px;line-height:15px;letter-spacing:0.05px">Табель учета рабочего<br>времени</span>
<div style="left:788px;top:895px;width:24px;height:1px;background:#555"></div>
<div class="cb" style="left:812px;top:889px;width:13px;height:13px;"><svg style="left:0;top:0" width="11" height="11" viewBox="0 0 11 11"><path d="M1 5.800L4 9.200L10.100 1.600" fill="none" stroke="#333" stroke-width="1.400"/></svg></div>
<span class="t" style="left:828px;top:890px;font-size:12px;line-height:13px;letter-spacing:0.1px">Просмотр</span>
<div class="cb" style="left:812px;top:904px;width:13px;height:13px;"></div>
<span class="t" style="left:828px;top:905px;font-size:12px;line-height:13px;letter-spacing:-0.2px">в MS Excel</span>
<div class="cb" style="left:812px;top:919px;width:13px;height:13px;"></div>
<span class="t" style="left:828px;top:920px;font-size:12px;line-height:13px;letter-spacing:0.25px">Форма 0504421</span>
<div class="cb" style="left:633px;top:945px;width:13px;height:13px;"></div>
<span class="t" style="left:649px;top:946px;font-size:12px;line-height:13px;letter-spacing:0.1px">Т13</span>
<div class="cb" style="left:677px;top:945px;width:13px;height:13px;"><svg style="left:0;top:0" width="11" height="11" viewBox="0 0 11 11"><path d="M1 5.800L4 9.200L10.100 1.600" fill="none" stroke="#333" stroke-width="1.400"/></svg></div>
<span class="t" style="left:693px;top:946px;font-size:12px;line-height:13px;letter-spacing:0.3px">по отделам</span>
<div class="cb" style="left:764px;top:945px;width:13px;height:13px;"></div>
<span class="t" style="left:780px;top:946px;font-size:12px;line-height:13px;letter-spacing:0.1px">аванс</span>
<div class="btn" style="left:1790px;top:888px;width:83px;height:46px;"></div>
<svg style="left:1824px;top:897px" width="16" height="15" viewBox="0 0 17.200 16.100"><rect x="0" y="0" width="17.200" height="16.100" fill="#c8c8c8"/><g transform="translate(-1,-0.600)"><path d="M2.500 11.500V1.600h7v9.900" fill="#fff" stroke="#000" stroke-width="1.200"/><path d="M1 11.500h13" stroke="#000" stroke-width="1.100"/><path d="M2.600 1.800L6.800 5.300V15.900L2.600 11.500z" fill="#a0a000" stroke="#000" stroke-width="0.900"/><path d="M11.100 6.500L15.200 2.900V4.900h2v3.100h-2v2z" fill="#0000a0"/></g></svg>
<span class="bl t" style="left:1790px;top:918px;width:83px;text-align:center;font-size:12px;letter-spacing:0.2px">Выход</span>
<div style="left:261px;top:277px;width:1295px;height:529px;background:#000;border-radius:7px 7px 0 0"></div>
<div style="left:262px;top:278px;width:1293px;height:527px;background:linear-gradient(#98b3d0 0,#b4cce8 28px,#b9d1ea 31px);border-radius:6px 6px 0 0;box-shadow:inset 1px 1px 0 rgba(255,255,255,.55),inset -1px 0 0 rgba(255,255,255,.35)"></div>
<div style="left:262px;top:804px;width:1293px;height:1px;background:#27c8e8"></div>
<div style="left:1554px;top:284px;width:1px;height:521px;background:#27c8e8"></div>
<div style="left:269px;top:308px;width:1279px;height:490px;background:#f0f0f0"></div>
<div style="left:269px;top:308px;width:1263px;height:474px;background:#434343 repeating-conic-gradient(#020202 0 25%,#858585 0 50%) 0 0/2px 2px"></div>
<div style="left:365px;top:324px;width:1126px;height:458px;background:#000"></div>
<div style="left:366px;top:325px;width:1122px;height:457px;background:#fff"></div>
<div style="left:1488px;top:325px;width:3px;height:457px;background:#000"></div>
<svg style="left:271.500px;top:289px" width="14" height="14" viewBox="0 0 14 14"><defs><linearGradient id="tg" x1="0" y1="0" x2="0" y2="1"><stop offset="0" stop-color="#6fa6a8"/><stop offset="1" stop-color="#149a84"/></linearGradient></defs><rect x="1.700" y="0.200" width="11.500" height="13" fill="#2f6f6c"/><rect x="1.700" y="0.200" width="10.400" height="12.200" fill="url(#tg)"/><rect x="0.300" y="0" width="1.500" height="12.800" fill="#f0ea00"/><path d="M1 0.500v12" stroke="#b8a800" stroke-width="0.700" stroke-dasharray="0.600 1.400"/><rect x="3.400" y="1.900" width="6.600" height="4.300" fill="#a8c8c8"/><rect x="4.300" y="2.500" width="5.300" height="3.300" fill="#fff"/></svg>
<span class="t" style="left:291px;top:290.600px;font-size:12px;color:#000;letter-spacing:-0.01px">Конструктор отчетов - tabelot30.frx - Страница 1</span>
<div style="left:1446px;top:287px;width:32px;height:18px;border:1px solid #53698a;border-radius:3px;background:linear-gradient(#c5d6e9,#b0c6df 48%,#94b0d1 52%,#a9c2dd);box-shadow:inset 0 0 0 1px rgba(255,255,255,.45)"><svg style="left:9px;top:7px" width="13" height="6"><rect x="0.600" y="0.600" width="10" height="3.600" rx="1" fill="#f6f2ea" stroke="#44485c" stroke-width="1.200"/></svg></div>
<div style="left:1480px;top:287px;width:32px;height:18px;border:1px solid #53698a;border-radius:3px;background:linear-gradient(#c5d6e9,#b0c6df 48%,#94b0d1 52%,#a9c2dd);box-shadow:inset 0 0 0 1px rgba(255,255,255,.45)"><svg style="left:9px;top:3px" width="13" height="10"><rect x="0.700" y="0.700" width="9.600" height="7.600" rx="1" fill="#f4f1ea" stroke="#44485c" stroke-width="1.400"/><rect x="3.500" y="3.200" width="4" height="2.400" fill="#8fb0d8" stroke="#44485c" stroke-width="1.100"/></svg></div>
<div style="left:1514px;top:287px;width:32px;height:18px;border:1px solid #5c1f22;border-radius:3px;background:linear-gradient(#eaab9d,#da8270 48%,#c4462a 52%,#d47a60);box-shadow:inset 0 0 0 1px rgba(255,255,255,.45)"><svg style="left:9px;top:3px" width="13" height="10"><path d="M1.400 1.800L10.600 7.200M10.600 1.800L1.400 7.200" stroke="#4a2a30" stroke-width="4.400"/><path d="M1.700 2L10.300 7M10.300 2L1.700 7" stroke="#fff" stroke-width="2.500"/></svg></div>
<svg style="left:1536px;top:313px" width="7" height="6"><path d="M1 4.600L3.500 1.600L6 4.600" fill="none" stroke="#5a5a5a" stroke-width="1.800"/></svg>
<svg style="left:1536px;top:772px" width="7" height="6"><path d="M1 1L3.500 4L6 1" fill="none" stroke="#5a5a5a" stroke-width="1.800"/></svg>
<div style="left:1533px;top:391px;width:15px;height:16px;background:#cdcdcd"></div>
<svg style="left:273px;top:786px" width="6" height="7"><path d="M4.600 1L1.600 3.500L4.600 6" fill="none" stroke="#5a5a5a" stroke-width="1.800"/></svg>
<svg style="left:1522px;top:786px" width="6" height="7"><path d="M1 1L4 3.500L1 6" fill="none" stroke="#5a5a5a" stroke-width="1.800"/></svg>
<div style="left:285px;top:783px;width:16px;height:15px;background:#cdcdcd"></div>
<svg style="left:1538px;top:788.500px" width="10" height="10"><path d="M7 1.500h2M4 4.500h2M7 4.500h2M1 7.500h2M4 7.500h2M7 7.500h2" stroke="#b4b4b4" stroke-width="2"/></svg>
<span class="m" style="left:404px;top:359.05px;font-size:14.67px;">Наша организация</span>
<span class="m" style="left:1374px;top:356.52px;font-size:10.67px;">Лист</span>
<span class="m" style="left:1429px;top:356.52px;font-size:10.67px;">1</span>
<span class="m b" style="left:679px;top:381.69px;font-size:18.67px;-webkit-text-stroke-width:0.5px;">Табель учета использования рабочего времени</span>
<span class="m" style="left:761.6px;top:409.28px;font-size:13.33px;">месяц</span>
<span class="m b" style="left:812.2px;top:409.28px;font-size:13.33px;color:#00007a;">ноябрь</span>
<span class="m" style="left:918.7px;top:409.28px;font-size:13.33px;">год</span>
<span class="m b" style="left:956.6px;top:409.28px;font-size:13.33px;color:#00007a;">2017</span>
<div class="ln" style="left:388px;top:437px;width:1054px;height:1px;"></div>
<div class="ln" style="left:589px;top:460px;width:771px;height:1px;"></div>
<div class="ln" style="left:388px;top:577px;width:1054px;height:1px;"></div>
<div class="ln" style="left:388px;top:593px;width:1054px;height:1px;"></div>
<div class="ln" style="left:388px;top:437px;width:1px;height:157px;"></div>
<div class="ln" style="left:413px;top:437px;width:1px;height:157px;"></div>
<div class="ln" style="left:537px;top:437px;width:1px;height:157px;"></div>
<div class="ln" style="left:589px;top:437px;width:1px;height:157px;"></div>
<div class="ln" style="left:1129px;top:437px;width:1px;height:157px;"></div>
<div class="ln" style="left:1359px;top:437px;width:1px;height:157px;"></div>
<div class="ln" style="left:1396px;top:437px;width:1px;height:157px;"></div>
<div class="ln" style="left:1441px;top:437px;width:1px;height:157px;"></div>
<div class="ln" style="left:607px;top:460px;width:1px;height:132px;"></div>
<div class="ln" style="left:625px;top:460px;width:1px;height:132px;"></div>
<div class="ln" style="left:643px;top:460px;width:1px;height:132px;"></div>
<div class="ln" style="left:661px;top:460px;width:1px;height:132px;"></div>
<div class="ln" style="left:679px;top:460px;width:1px;height:132px;"></div>
<div class="ln" style="left:697px;top:460px;width:1px;height:132px;"></div>
<div class="ln" style="left:715px;top:460px;width:1px;height:132px;"></div>
<div class="ln" style="left:733px;top:460px;width:1px;height:132px;"></div>
<div class="ln" style="left:751px;top:460px;width:1px;height:132px;"></div>
<div class="ln" style="left:769px;top:460px;width:1px;height:132px;"></div>
<div class="ln" style="left:787px;top:460px;width:1px;height:132px;"></div>
<div class="ln" style="left:805px;top:460px;width:1px;height:132px;"></div>
<div class="ln" style="left:823px;top:460px;width:1px;height:132px;"></div>
<div class="ln" style="left:841px;top:460px;width:1px;height:132px;"></div>
<div class="ln" style="left:859px;top:460px;width:1px;height:132px;"></div>
<div class="ln" style="left:877px;top:460px;width:1px;height:132px;"></div>
<div class="ln" style="left:895px;top:460px;width:1px;height:132px;"></div>
<div class="ln" style="left:913px;top:460px;width:1px;height:132px;"></div>
<div class="ln" style="left:931px;top:460px;width:1px;height:132px;"></div>
<div class="ln" style="left:949px;top:460px;width:1px;height:132px;"></div>
<div class="ln" style="left:967px;top:460px;width:1px;height:132px;"></div>
<div class="ln" style="left:985px;top:460px;width:1px;height:132px;"></div>
<div class="ln" style="left:1003px;top:460px;width:1px;height:132px;"></div>
<div class="ln" style="left:1021px;top:460px;width:1px;height:132px;"></div>
<div class="ln" style="left:1039px;top:460px;width:1px;height:132px;"></div>
<div class="ln" style="left:1057px;top:460px;width:1px;height:132px;"></div>
<div class="ln" style="left:1075px;top:460px;width:1px;height:132px;"></div>
<div class="ln" style="left:1093px;top:460px;width:1px;height:132px;"></div>
<div class="ln" style="left:1111px;top:460px;width:1px;height:132px;"></div>
<div class="ln" style="left:1148px;top:460px;width:1px;height:132px;"></div>
<div class="ln" style="left:1167px;top:460px;width:1px;height:132px;"></div>
<div class="ln" style="left:1188px;top:460px;width:1px;height:132px;"></div>
<div class="ln" style="left:1208px;top:460px;width:1px;height:132px;"></div>
<div class="ln" style="left:1229px;top:460px;width:1px;height:132px;"></div>
<div class="ln" style="left:1252px;top:460px;width:1px;height:132px;"></div>
<div class="ln" style="left:1275px;top:460px;width:1px;height:132px;"></div>
<div class="ln" style="left:1304px;top:460px;width:1px;height:132px;"></div>
<div class="ln" style="left:1334px;top:460px;width:1px;height:132px;"></div>
<span class="m b" style="left:389px;width:24px;text-align:center;top:498.32px;font-size:10.67px;letter-spacing:-0.3px;">№пп</span>
<span class="m b" style="left:414px;width:123px;text-align:center;top:475.32px;font-size:10.67px;">Фамилия,</span>
<span class="m b" style="left:414px;width:123px;text-align:center;top:489.52px;font-size:10.67px;">Имя, Отчество,</span>
<span class="m b" style="left:414px;width:123px;text-align:center;top:503.72px;font-size:10.67px;">должность</span>
<span class="m b" style="left:414px;width:123px;text-align:center;top:517.92px;font-size:10.67px;">(специальность,</span>
<span class="m b" style="left:414px;width:123px;text-align:center;top:532.12px;font-size:10.67px;">профессия)</span>
<span class="m b" style="left:538px;width:51px;text-align:center;top:495.62px;font-size:10.67px;">Табель-</span>
<span class="m b" style="left:538px;width:51px;text-align:center;top:509.82px;font-size:10.67px;">ный</span>
<span class="m b" style="left:538px;width:51px;text-align:center;top:524.02px;font-size:10.67px;">номер</span>
<span class="m b" style="left:590px;width:539px;text-align:center;top:443.32px;font-size:10.67px;">Отметки о явках и неявках на работу по числам месяца</span>
<span class="m b" style="left:1172.3px;top:443.32px;font-size:10.67px;">Итого  за месяц дней</span>
<span class="m b" style="left:590px;width:17px;text-align:center;top:514.32px;font-size:10.67px;">1</span>
<span class="m b" style="left:608px;width:17px;text-align:center;top:514.32px;font-size:10.67px;">2</span>
<span class="m b" style="left:626px;width:17px;text-align:center;top:514.32px;font-size:10.67px;">3</span>
<span class="m b" style="left:644px;width:17px;text-align:center;top:514.32px;font-size:10.67px;">4</span>
<span class="m b" style="left:662px;width:17px;text-align:center;top:514.32px;font-size:10.67px;">5</span>
<span class="m b" style="left:680px;width:17px;text-align:center;top:514.32px;font-size:10.67px;">6</span>
<span class="m b" style="left:698px;width:17px;text-align:center;top:514.32px;font-size:10.67px;">7</span>
<span class="m b" style="left:716px;width:17px;text-align:center;top:514.32px;font-size:10.67px;">8</span>
<span class="m b" style="left:734px;width:17px;text-align:center;top:514.32px;font-size:10.67px;">9</span>
<span class="m b" style="left:752px;width:17px;text-align:center;top:514.32px;font-size:10.67px;letter-spacing:-0.6px;">10</span>
<span class="m b" style="left:770px;width:17px;text-align:center;top:514.32px;font-size:10.67px;letter-spacing:-0.6px;">11</span>
<span class="m b" style="left:788px;width:17px;text-align:center;top:514.32px;font-size:10.67px;letter-spacing:-0.6px;">12</span>
<span class="m b" style="left:806px;width:17px;text-align:center;top:514.32px;font-size:10.67px;letter-spacing:-0.6px;">13</span>
<span class="m b" style="left:824px;width:17px;text-align:center;top:514.32px;font-size:10.67px;letter-spacing:-0.6px;">14</span>
<span class="m b" style="left:842px;width:17px;text-align:center;top:514.32px;font-size:10.67px;letter-spacing:-0.6px;">15</span>
<span class="m b" style="left:860px;width:17px;text-align:center;top:514.32px;font-size:10.67px;letter-spacing:-0.6px;">16</span>
<span class="m b" style="left:878px;width:17px;text-align:center;top:514.32px;font-size:10.67px;letter-spacing:-0.6px;">17</span>
<span class="m b" style="left:896px;width:17px;text-align:center;top:514.32px;font-size:10.67px;letter-spacing:-0.6px;">18</span>
<span class="m b" style="left:914px;width:17px;text-align:center;top:514.32px;font-size:10.67px;letter-spacing:-0.6px;">19</span>
<span class="m b" style="left:932px;width:17px;text-align:center;top:514.32px;font-size:10.67px;letter-spacing:-0.6px;">20</span>
<span class="m b" style="left:950px;width:17px;text-align:center;top:514.32px;font-size:10.67px;letter-spacing:-0.6px;">21</span>
<span class="m b" style="left:968px;width:17px;text-align:center;top:514.32px;font-size:10.67px;letter-spacing:-0.6px;">22</span>
<span class="m b" style="left:986px;width:17px;text-align:center;top:514.32px;font-size:10.67px;letter-spacing:-0.6px;">23</span>
<span class="m b" style="left:1004px;width:17px;text-align:center;top:514.32px;font-size:10.67px;letter-spacing:-0.6px;">24</span>
<span class="m b" style="left:1022px;width:17px;text-align:center;top:514.32px;font-size:10.67px;letter-spacing:-0.6px;">25</span>
<span class="m b" style="left:1040px;width:17px;text-align:center;top:514.32px;font-size:10.67px;letter-spacing:-0.6px;">26</span>
<span class="m b" style="left:1058px;width:17px;text-align:center;top:514.32px;font-size:10.67px;letter-spacing:-0.6px;">27</span>
<span class="m b" style="left:1076px;width:17px;text-align:center;top:514.32px;font-size:10.67px;letter-spacing:-0.6px;">28</span>
<span class="m b" style="left:1094px;width:17px;text-align:center;top:514.32px;font-size:10.67px;letter-spacing:-0.6px;">29</span>
<span class="m b" style="left:1112px;width:17px;text-align:center;top:514.32px;font-size:10.67px;letter-spacing:-0.6px;">30</span>
<span class="m b" style="left:1130px;width:18px;text-align:center;top:492.90px;font-size:9px;letter-spacing:0.1px;">от</span>
<span class="m b" style="left:1130px;width:18px;text-align:center;top:504.85px;font-size:9px;letter-spacing:0.1px;">ра</span>
<span class="m b" style="left:1130px;width:18px;text-align:center;top:516.80px;font-size:9px;letter-spacing:0.1px;">бо</span>
<span class="m b" style="left:1130px;width:18px;text-align:center;top:528.75px;font-size:9px;letter-spacing:0.1px;">та</span>
<span class="m b" style="left:1130px;width:18px;text-align:center;top:540.70px;font-size:9px;letter-spacing:0.1px;">но</span>
<span class="m b" style="left:1149px;width:18px;text-align:center;top:492.90px;font-size:9px;letter-spacing:0.1px;">ко</span>
<span class="m b" style="left:1149px;width:18px;text-align:center;top:504.85px;font-size:9px;letter-spacing:0.1px;">ман</span>
<span class="m b" style="left:1149px;width:18px;text-align:center;top:516.80px;font-size:9px;letter-spacing:0.1px;">ди</span>
<span class="m b" style="left:1149px;width:18px;text-align:center;top:528.75px;font-size:9px;letter-spacing:0.1px;">ров</span>
<span class="m b" style="left:1149px;width:18px;text-align:center;top:540.70px;font-size:9px;letter-spacing:0.1px;">ка</span>
<span class="m b" style="left:1168px;width:20px;text-align:center;top:492.90px;font-size:9px;letter-spacing:0.1px;">оче</span>
<span class="m b" style="left:1168px;width:20px;text-align:center;top:504.85px;font-size:9px;letter-spacing:0.1px;">ред</span>
<span class="m b" style="left:1168px;width:20px;text-align:center;top:516.80px;font-size:9px;letter-spacing:0.1px;">ной</span>
<span class="m b" style="left:1168px;width:20px;text-align:center;top:528.75px;font-size:9px;letter-spacing:0.1px;">от</span>
<span class="m b" style="left:1168px;width:20px;text-align:center;top:540.70px;font-size:9px;letter-spacing:0.1px;">пуск</span>
<span class="m b" style="left:1189px;width:19px;text-align:center;top:492.90px;font-size:9px;letter-spacing:0.1px;">боль</span>
<span class="m b" style="left:1189px;width:19px;text-align:center;top:504.85px;font-size:9px;letter-spacing:0.1px;">нич</span>
<span class="m b" style="left:1189px;width:19px;text-align:center;top:516.80px;font-size:9px;letter-spacing:0.1px;">ные</span>
<span class="m b" style="left:1189px;width:19px;text-align:center;top:540.70px;font-size:9px;letter-spacing:0.1px;">дни</span>
<span class="m b" style="left:1209px;width:20px;text-align:center;top:486.90px;font-size:9px;letter-spacing:0.1px;">вы</span>
<span class="m b" style="left:1209px;width:20px;text-align:center;top:498.85px;font-size:9px;letter-spacing:0.1px;">ход</span>
<span class="m b" style="left:1209px;width:20px;text-align:center;top:510.80px;font-size:9px;letter-spacing:0.1px;">ные,</span>
<span class="m b" style="left:1209px;width:20px;text-align:center;top:522.75px;font-size:9px;letter-spacing:0.1px;">праз</span>
<span class="m b" style="left:1209px;width:20px;text-align:center;top:534.70px;font-size:9px;letter-spacing:0.1px;">днич</span>
<span class="m b" style="left:1209px;width:20px;text-align:center;top:546.65px;font-size:9px;letter-spacing:0.1px;">ные</span>
<span class="m b" style="left:1230px;width:22px;text-align:center;top:479.50px;font-size:9px;letter-spacing:0.1px;">От-</span>
<span class="m b" style="left:1230px;width:22px;text-align:center;top:491.45px;font-size:9px;letter-spacing:0.1px;">пуск</span>
<span class="m b" style="left:1230px;width:22px;text-align:center;top:503.40px;font-size:9px;letter-spacing:0.1px;">без</span>
<span class="m b" style="left:1230px;width:22px;text-align:center;top:515.35px;font-size:9px;letter-spacing:0.1px;">сохр.</span>
<span class="m b" style="left:1230px;width:22px;text-align:center;top:527.30px;font-size:9px;letter-spacing:0.1px;">зар.</span>
<span class="m b" style="left:1230px;width:22px;text-align:center;top:539.25px;font-size:9px;letter-spacing:0.1px;">пла-</span>
<span class="m b" style="left:1230px;width:22px;text-align:center;top:551.20px;font-size:9px;letter-spacing:0.1px;">ты</span>
<span class="m b" style="left:1253px;width:22px;text-align:center;top:495.40px;font-size:9px;letter-spacing:0.1px;">учеб</span>
<span class="m b" style="left:1253px;width:22px;text-align:center;top:507.35px;font-size:9px;letter-spacing:0.1px;">ный</span>
<span class="m b" style="left:1253px;width:22px;text-align:center;top:519.30px;font-size:9px;letter-spacing:0.1px;">от</span>
<span class="m b" style="left:1253px;width:22px;text-align:center;top:531.25px;font-size:9px;letter-spacing:0.1px;">пуск</span>
<span class="m b" style="left:1276px;width:28px;text-align:center;top:467.70px;font-size:9px;letter-spacing:0.1px;">от</span>
<span class="m b" style="left:1276px;width:28px;text-align:center;top:479.65px;font-size:9px;letter-spacing:0.1px;">пуск</span>
<span class="m b" style="left:1276px;width:28px;text-align:center;top:491.60px;font-size:9px;letter-spacing:0.1px;">по</span>
<span class="m b" style="left:1276px;width:28px;text-align:center;top:503.55px;font-size:9px;letter-spacing:0.1px;">бере</span>
<span class="m b" style="left:1276px;width:28px;text-align:center;top:515.50px;font-size:9px;letter-spacing:0.1px;">мен</span>
<span class="m b" style="left:1276px;width:28px;text-align:center;top:527.45px;font-size:9px;letter-spacing:0.1px;">нос</span>
<span class="m b" style="left:1276px;width:28px;text-align:center;top:539.40px;font-size:9px;letter-spacing:0.1px;">ти</span>
<span class="m b" style="left:1276px;width:28px;text-align:center;top:551.35px;font-size:9px;letter-spacing:0.1px;">и ро</span>
<span class="m b" style="left:1276px;width:28px;text-align:center;top:563.30px;font-size:9px;letter-spacing:0.1px;">дам</span>
<span class="m b" style="left:1305px;width:29px;text-align:center;top:467.70px;font-size:9px;letter-spacing:0.1px;">от</span>
<span class="m b" style="left:1305px;width:29px;text-align:center;top:479.65px;font-size:9px;letter-spacing:0.1px;">пуск</span>
<span class="m b" style="left:1305px;width:29px;text-align:center;top:491.60px;font-size:9px;letter-spacing:0.1px;">по</span>
<span class="m b" style="left:1305px;width:29px;text-align:center;top:503.55px;font-size:9px;letter-spacing:0.1px;">уходу</span>
<span class="m b" style="left:1305px;width:29px;text-align:center;top:515.50px;font-size:9px;letter-spacing:0.1px;">за</span>
<span class="m b" style="left:1305px;width:29px;text-align:center;top:527.45px;font-size:9px;letter-spacing:0.1px;">ребен</span>
<span class="m b" style="left:1305px;width:29px;text-align:center;top:539.40px;font-size:9px;letter-spacing:0.1px;">ком</span>
<span class="m b" style="left:1305px;width:29px;text-align:center;top:551.35px;font-size:9px;letter-spacing:0.1px;">до 3</span>
<span class="m b" style="left:1305px;width:29px;text-align:center;top:563.30px;font-size:9px;letter-spacing:0.1px;">лет</span>
<span class="m b" style="left:1335px;width:24px;text-align:center;top:503.40px;font-size:9px;letter-spacing:0.1px;">про</span>
<span class="m b" style="left:1335px;width:24px;text-align:center;top:515.35px;font-size:9px;letter-spacing:0.1px;">гу</span>
<span class="m b" style="left:1335px;width:24px;text-align:center;top:527.30px;font-size:9px;letter-spacing:0.1px;">лы</span>
<span class="m b" style="left:1360px;width:36px;text-align:center;top:491.47px;font-size:11px;letter-spacing:-0.3px;">Итого</span>
<span class="m b" style="left:1360px;width:36px;text-align:center;top:505.67px;font-size:11px;letter-spacing:-0.3px;">дней</span>
<span class="m b" style="left:1397px;width:44px;text-align:center;top:470.47px;font-size:11px;letter-spacing:-0.3px;">Итого</span>
<span class="m b" style="left:1397px;width:44px;text-align:center;top:484.57px;font-size:11px;letter-spacing:-0.3px;">отра-</span>
<span class="m b" style="left:1397px;width:44px;text-align:center;top:498.67px;font-size:11px;letter-spacing:-0.3px;">бо-</span>
<span class="m b" style="left:1397px;width:44px;text-align:center;top:512.77px;font-size:11px;letter-spacing:-0.3px;">тано</span>
<span class="m b" style="left:1397px;width:44px;text-align:center;top:526.87px;font-size:11px;letter-spacing:-0.3px;">часов</span>
<span class="m" style="left:389px;width:24px;text-align:center;top:580.32px;font-size:10.67px;">1</span>
<span class="m" style="left:414px;width:123px;text-align:center;top:580.32px;font-size:10.67px;">2</span>
<span class="m" style="left:538px;width:51px;text-align:center;top:580.32px;font-size:10.67px;">3</span>
<span class="m" style="left:590px;width:17px;text-align:center;top:580.32px;font-size:10.67px;">4</span>
<span class="m" style="left:608px;width:17px;text-align:center;top:580.32px;font-size:10.67px;">5</span>
<span class="m" style="left:626px;width:17px;text-align:center;top:580.32px;font-size:10.67px;">6</span>
<span class="m" style="left:644px;width:17px;text-align:center;top:580.32px;font-size:10.67px;">7</span>
<span class="m" style="left:662px;width:17px;text-align:center;top:580.32px;font-size:10.67px;">8</span>
<span class="m" style="left:680px;width:17px;text-align:center;top:580.32px;font-size:10.67px;">9</span>
<span class="m" style="left:698px;width:17px;text-align:center;top:580.32px;font-size:10.67px;letter-spacing:-0.7px;">10</span>
<span class="m" style="left:716px;width:17px;text-align:center;top:580.32px;font-size:10.67px;letter-spacing:-0.7px;">11</span>
<span class="m" style="left:734px;width:17px;text-align:center;top:580.32px;font-size:10.67px;letter-spacing:-0.7px;">12</span>
<span class="m" style="left:752px;width:17px;text-align:center;top:580.32px;font-size:10.67px;letter-spacing:-0.7px;">13</span>
<span class="m" style="left:770px;width:17px;text-align:center;top:580.32px;font-size:10.67px;letter-spacing:-0.7px;">14</span>
<span class="m" style="left:788px;width:17px;text-align:center;top:580.32px;font-size:10.67px;letter-spacing:-0.7px;">15</span>
<span class="m" style="left:806px;width:17px;text-align:center;top:580.32px;font-size:10.67px;letter-spacing:-0.7px;">16</span>
<span class="m" style="left:824px;width:17px;text-align:center;top:580.32px;font-size:10.67px;letter-spacing:-0.7px;">17</span>
<span class="m" style="left:842px;width:17px;text-align:center;top:580.32px;font-size:10.67px;letter-spacing:-0.7px;">18</span>
<span class="m" style="left:860px;width:17px;text-align:center;top:580.32px;font-size:10.67px;letter-spacing:-0.7px;">19</span>
<span class="m" style="left:878px;width:17px;text-align:center;top:580.32px;font-size:10.67px;letter-spacing:-0.7px;">20</span>
<span class="m" style="left:896px;width:17px;text-align:center;top:580.32px;font-size:10.67px;letter-spacing:-0.7px;">21</span>
<span class="m" style="left:914px;width:17px;text-align:center;top:580.32px;font-size:10.67px;letter-spacing:-0.7px;">22</span>
<span class="m" style="left:932px;width:17px;text-align:center;top:580.32px;font-size:10.67px;letter-spacing:-0.7px;">23</span>
<span class="m" style="left:950px;width:17px;text-align:center;top:580.32px;font-size:10.67px;letter-spacing:-0.7px;">24</span>
<span class="m" style="left:968px;width:17px;text-align:center;top:580.32px;font-size:10.67px;letter-spacing:-0.7px;">25</span>
<span class="m" style="left:986px;width:17px;text-align:center;top:580.32px;font-size:10.67px;letter-spacing:-0.7px;">26</span>
<span class="m" style="left:1004px;width:17px;text-align:center;top:580.32px;font-size:10.67px;letter-spacing:-0.7px;">27</span>
<span class="m" style="left:1022px;width:17px;text-align:center;top:580.32px;font-size:10.67px;letter-spacing:-0.7px;">28</span>
<span class="m" style="left:1040px;width:17px;text-align:center;top:580.32px;font-size:10.67px;letter-spacing:-0.7px;">29</span>
<span class="m" style="left:1058px;width:17px;text-align:center;top:580.32px;font-size:10.67px;letter-spacing:-0.7px;">30</span>
<span class="m" style="left:1076px;width:17px;text-align:center;top:580.32px;font-size:10.67px;letter-spacing:-0.7px;">31</span>
<span class="m" style="left:1094px;width:17px;text-align:center;top:580.32px;font-size:10.67px;letter-spacing:-0.7px;">32</span>
<span class="m" style="left:1112px;width:17px;text-align:center;top:580.32px;font-size:10.67px;letter-spacing:-0.7px;">33</span>
<span class="m" style="left:1130px;width:18px;text-align:center;top:580.32px;font-size:10.67px;letter-spacing:-0.7px;">34</span>
<span class="m" style="left:1149px;width:18px;text-align:center;top:580.32px;font-size:10.67px;letter-spacing:-0.7px;">35</span>
<span class="m" style="left:1168px;width:20px;text-align:center;top:580.32px;font-size:10.67px;letter-spacing:-0.7px;">36</span>
<span class="m" style="left:1189px;width:19px;text-align:center;top:580.32px;font-size:10.67px;letter-spacing:-0.7px;">37</span>
<span class="m" style="left:1209px;width:20px;text-align:center;top:580.32px;font-size:10.67px;letter-spacing:-0.7px;">38</span>
<span class="m" style="left:1230px;width:22px;text-align:center;top:580.32px;font-size:10.67px;letter-spacing:-0.7px;">39</span>
<span class="m" style="left:1253px;width:22px;text-align:center;top:580.32px;font-size:10.67px;letter-spacing:-0.7px;">40</span>
<span class="m" style="left:1276px;width:28px;text-align:center;top:580.32px;font-size:10.67px;letter-spacing:-0.7px;">41</span>
<span class="m" style="left:1305px;width:29px;text-align:center;top:580.32px;font-size:10.67px;letter-spacing:-0.7px;">42</span>
<span class="m" style="left:1335px;width:24px;text-align:center;top:580.32px;font-size:10.67px;letter-spacing:-0.7px;">43</span>
<span class="m" style="left:1360px;width:36px;text-align:center;top:580.32px;font-size:10.67px;">44</span>
<span class="m" style="left:1397px;width:44px;text-align:center;top:580.32px;font-size:10.67px;">45</span>
<span class="m b" style="left:412px;top:601.78px;font-size:13.33px;">Подразделение: бухгалтерия</span>
<div class="ln" style="left:388px;top:618px;width:1054px;height:1px;"></div>
<div class="ln" style="left:388px;top:673px;width:1054px;height:1px;"></div>
<div class="ln" style="left:388px;top:618px;width:1px;height:56px;"></div>
<div class="ln" style="left:413px;top:618px;width:1px;height:56px;"></div>
<div class="ln" style="left:537px;top:618px;width:1px;height:56px;"></div>
<div class="ln" style="left:589px;top:618px;width:1px;height:56px;"></div>
<div class="ln" style="left:607px;top:618px;width:1px;height:56px;"></div>
<div class="ln" style="left:625px;top:618px;width:1px;height:56px;"></div>
<div class="ln" style="left:643px;top:618px;width:1px;height:56px;"></div>
<div class="ln" style="left:661px;top:618px;width:1px;height:56px;"></div>
<div class="ln" style="left:679px;top:618px;width:1px;height:56px;"></div>
<div class="ln" style="left:697px;top:618px;width:1px;height:56px;"></div>
<div class="ln" style="left:715px;top:618px;width:1px;height:56px;"></div>
<div class="ln" style="left:733px;top:618px;width:1px;height:56px;"></div>
<div class="ln" style="left:751px;top:618px;width:1px;height:56px;"></div>
<div class="ln" style="left:769px;top:618px;width:1px;height:56px;"></div>
<div class="ln" style="left:787px;top:618px;width:1px;height:56px;"></div>
<div class="ln" style="left:805px;top:618px;width:1px;height:56px;"></div>
<div class="ln" style="left:823px;top:618px;width:1px;height:56px;"></div>
<div class="ln" style="left:841px;top:618px;width:1px;height:56px;"></div>
<div class="ln" style="left:859px;top:618px;width:1px;height:56px;"></div>
<div class="ln" style="left:877px;top:618px;width:1px;height:56px;"></div>
<div class="ln" style="left:895px;top:618px;width:1px;height:56px;"></div>
<div class="ln" style="left:913px;top:618px;width:1px;height:56px;"></div>
<div class="ln" style="left:931px;top:618px;width:1px;height:56px;"></div>
<div class="ln" style="left:949px;top:618px;width:1px;height:56px;"></div>
<div class="ln" style="left:967px;top:618px;width:1px;height:56px;"></div>
<div class="ln" style="left:985px;top:618px;width:1px;height:56px;"></div>
<div class="ln" style="left:1003px;top:618px;width:1px;height:56px;"></div>
<div class="ln" style="left:1021px;top:618px;width:1px;height:56px;"></div>
<div class="ln" style="left:1039px;top:618px;width:1px;height:56px;"></div>
<div class="ln" style="left:1057px;top:618px;width:1px;height:56px;"></div>
<div class="ln" style="left:1075px;top:618px;width:1px;height:56px;"></div>
<div class="ln" style="left:1093px;top:618px;width:1px;height:56px;"></div>
<div class="ln" style="left:1111px;top:618px;width:1px;height:56px;"></div>
<div class="ln" style="left:1129px;top:618px;width:1px;height:56px;"></div>
<div class="ln" style="left:1148px;top:618px;width:1px;height:56px;"></div>
<div class="ln" style="left:1167px;top:618px;width:1px;height:56px;"></div>
<div class="ln" style="left:1188px;top:618px;width:1px;height:56px;"></div>
<div class="ln" style="left:1208px;top:618px;width:1px;height:56px;"></div>
<div class="ln" style="left:1229px;top:618px;width:1px;height:56px;"></div>
<div class="ln" style="left:1252px;top:618px;width:1px;height:56px;"></div>
<div class="ln" style="left:1275px;top:618px;width:1px;height:56px;"></div>
<div class="ln" style="left:1304px;top:618px;width:1px;height:56px;"></div>
<div class="ln" style="left:1334px;top:618px;width:1px;height:56px;"></div>
<div class="ln" style="left:1359px;top:618px;width:1px;height:56px;"></div>
<div class="ln" style="left:1396px;top:618px;width:1px;height:56px;"></div>
<div class="ln" style="left:1441px;top:618px;width:1px;height:56px;"></div>
<span class="m" style="left:399px;top:626.42px;font-size:10.67px;">1</span>
<span class="m" style="left:415px;top:626.42px;font-size:10.67px;">Петров Сергей</span>
<span class="m" style="left:415px;top:642.42px;font-size:10.67px;">Александрович,</span>
<span class="m" style="left:415px;top:658.42px;font-size:10.67px;">Электрик</span>
<span class="m" style="left:539px;top:626.42px;font-size:10.67px;">3</span>
<span class="m" style="left:592px;top:626.42px;font-size:10.67px;">В</span>
<span class="m" style="left:610px;top:626.42px;font-size:10.67px;">В</span>
<span class="m" style="left:628px;top:626.42px;font-size:10.67px;">В</span>
<span class="m" style="left:646px;top:626.42px;font-size:10.67px;">Я/</span>
<span class="m" style="left:646px;top:642.42px;font-size:10.67px;">Н</span>
<span class="m" style="left:664px;top:626.42px;font-size:10.67px;">Я/</span>
<span class="m" style="left:664px;top:642.42px;font-size:10.67px;">Н</span>
<span class="m" style="left:682px;top:626.42px;font-size:10.67px;">В</span>
<span class="m" style="left:700px;top:626.42px;font-size:10.67px;">В</span>
<span class="m" style="left:718px;top:626.42px;font-size:10.67px;">В</span>
<span class="m" style="left:736px;top:626.42px;font-size:10.67px;">Я/</span>
<span class="m" style="left:736px;top:642.42px;font-size:10.67px;">Н</span>
<span class="m" style="left:754px;top:626.42px;font-size:10.67px;">Я/</span>
<span class="m" style="left:754px;top:642.42px;font-size:10.67px;">Н</span>
<span class="m" style="left:772px;top:626.42px;font-size:10.67px;">В</span>
<span class="m" style="left:790px;top:626.42px;font-size:10.67px;">В</span>
<span class="m" style="left:808px;top:626.42px;font-size:10.67px;">В</span>
<span class="m" style="left:826px;top:626.42px;font-size:10.67px;">Я/</span>
<span class="m" style="left:826px;top:642.42px;font-size:10.67px;">Н</span>
<span class="m" style="left:844px;top:626.42px;font-size:10.67px;">Я/</span>
<span class="m" style="left:844px;top:642.42px;font-size:10.67px;">Н</span>
<span class="m" style="left:862px;top:626.42px;font-size:10.67px;">В</span>
<span class="m" style="left:880px;top:626.42px;font-size:10.67px;">В</span>
<span class="m" style="left:898px;top:626.42px;font-size:10.67px;">В</span>
<span class="m" style="left:916px;top:626.42px;font-size:10.67px;">Я/</span>
<span class="m" style="left:916px;top:642.42px;font-size:10.67px;">Н</span>
<span class="m" style="left:934px;top:626.42px;font-size:10.67px;">Я/</span>
<span class="m" style="left:934px;top:642.42px;font-size:10.67px;">Н</span>
<span class="m" style="left:952px;top:626.42px;font-size:10.67px;">В</span>
<span class="m" style="left:970px;top:626.42px;font-size:10.67px;">В</span>
<span class="m" style="left:988px;top:626.42px;font-size:10.67px;">В</span>
<span class="m" style="left:1006px;top:626.42px;font-size:10.67px;">Я/</span>
<span class="m" style="left:1006px;top:642.42px;font-size:10.67px;">Н</span>
<span class="m" style="left:1024px;top:626.42px;font-size:10.67px;">Я/</span>
<span class="m" style="left:1024px;top:642.42px;font-size:10.67px;">Н</span>
<span class="m" style="left:1042px;top:626.42px;font-size:10.67px;">В</span>
<span class="m" style="left:1060px;top:626.42px;font-size:10.67px;">В</span>
<span class="m" style="left:1078px;top:626.42px;font-size:10.67px;">В</span>
<span class="m" style="left:1096px;top:626.42px;font-size:10.67px;">Я/</span>
<span class="m" style="left:1096px;top:642.42px;font-size:10.67px;">Н</span>
<span class="m" style="left:1114px;top:626.42px;font-size:10.67px;">Я/</span>
<span class="m" style="left:1114px;top:642.42px;font-size:10.67px;">Н</span>
<span class="m" style="left:1130px;width:18px;text-align:center;top:626.42px;font-size:10.67px;letter-spacing:-0.5px;">12</span>
<span class="m" style="left:1149px;width:18px;text-align:center;top:626.42px;font-size:10.67px;">0</span>
<span class="m" style="left:1168px;width:20px;text-align:center;top:626.42px;font-size:10.67px;">0</span>
<span class="m" style="left:1189px;width:19px;text-align:center;top:626.42px;font-size:10.67px;">0</span>
<span class="m" style="left:1209px;width:20px;text-align:center;top:626.42px;font-size:10.67px;letter-spacing:-0.5px;">18</span>
<span class="m" style="left:1230px;width:22px;text-align:center;top:626.42px;font-size:10.67px;">0</span>
<span class="m" style="left:1253px;width:22px;text-align:center;top:626.42px;font-size:10.67px;">0</span>
<span class="m" style="left:1276px;width:28px;text-align:center;top:626.42px;font-size:10.67px;">0</span>
<span class="m" style="left:1305px;width:29px;text-align:center;top:626.42px;font-size:10.67px;">0</span>
<span class="m" style="left:1335px;width:24px;text-align:center;top:626.42px;font-size:10.67px;">0</span>
<span class="m" style="left:1360px;width:36px;text-align:center;top:626.42px;font-size:10.67px;">30</span>
<span class="m" style="left:1400px;top:641.42px;font-size:10.67px;">96,00</span>
<span class="m b" style="left:412px;top:681.78px;font-size:13.33px;">Подразделение: плановый отдел</span>
<div class="ln" style="left:388px;top:698px;width:1054px;height:1px;"></div>
<div class="ln" style="left:388px;top:753px;width:1054px;height:1px;"></div>
<div class="ln" style="left:388px;top:698px;width:1px;height:56px;"></div>
<div class="ln" style="left:413px;top:698px;width:1px;height:56px;"></div>
<div class="ln" style="left:537px;top:698px;width:1px;height:56px;"></div>
<div class="ln" style="left:589px;top:698px;width:1px;height:56px;"></div>
<div class="ln" style="left:607px;top:698px;width:1px;height:56px;"></div>
<div class="ln" style="left:625px;top:698px;width:1px;height:56px;"></div>
<div class="ln" style="left:643px;top:698px;width:1px;height:56px;"></div>
<div class="ln" style="left:661px;top:698px;width:1px;height:56px;"></div>
<div class="ln" style="left:679px;top:698px;width:1px;height:56px;"></div>
<div class="ln" style="left:697px;top:698px;width:1px;height:56px;"></div>
<div class="ln" style="left:715px;top:698px;width:1px;height:56px;"></div>
<div class="ln" style="left:733px;top:698px;width:1px;height:56px;"></div>
<div class="ln" style="left:751px;top:698px;width:1px;height:56px;"></div>
<div class="ln" style="left:769px;top:698px;width:1px;height:56px;"></div>
<div class="ln" style="left:787px;top:698px;width:1px;height:56px;"></div>
<div class="ln" style="left:805px;top:698px;width:1px;height:56px;"></div>
<div class="ln" style="left:823px;top:698px;width:1px;height:56px;"></div>
<div class="ln" style="left:841px;top:698px;width:1px;height:56px;"></div>
<div class="ln" style="left:859px;top:698px;width:1px;height:56px;"></div>
<div class="ln" style="left:877px;top:698px;width:1px;height:56px;"></div>
<div class="ln" style="left:895px;top:698px;width:1px;height:56px;"></div>
<div class="ln" style="left:913px;top:698px;width:1px;height:56px;"></div>
<div class="ln" style="left:931px;top:698px;width:1px;height:56px;"></div>
<div class="ln" style="left:949px;top:698px;width:1px;height:56px;"></div>
<div class="ln" style="left:967px;top:698px;width:1px;height:56px;"></div>
<div class="ln" style="left:985px;top:698px;width:1px;height:56px;"></div>
<div class="ln" style="left:1003px;top:698px;width:1px;height:56px;"></div>
<div class="ln" style="left:1021px;top:698px;width:1px;height:56px;"></div>
<div class="ln" style="left:1039px;top:698px;width:1px;height:56px;"></div>
<div class="ln" style="left:1057px;top:698px;width:1px;height:56px;"></div>
<div class="ln" style="left:1075px;top:698px;width:1px;height:56px;"></div>
<div class="ln" style="left:1093px;top:698px;width:1px;height:56px;"></div>
<div class="ln" style="left:1111px;top:698px;width:1px;height:56px;"></div>
<div class="ln" style="left:1129px;top:698px;width:1px;height:56px;"></div>
<div class="ln" style="left:1148px;top:698px;width:1px;height:56px;"></div>
<div class="ln" style="left:1167px;top:698px;width:1px;height:56px;"></div>
<div class="ln" style="left:1188px;top:698px;width:1px;height:56px;"></div>
<div class="ln" style="left:1208px;top:698px;width:1px;height:56px;"></div>
<div class="ln" style="left:1229px;top:698px;width:1px;height:56px;"></div>
<div class="ln" style="left:1252px;top:698px;width:1px;height:56px;"></div>
<div class="ln" style="left:1275px;top:698px;width:1px;height:56px;"></div>
<div class="ln" style="left:1304px;top:698px;width:1px;height:56px;"></div>
<div class="ln" style="left:1334px;top:698px;width:1px;height:56px;"></div>
<div class="ln" style="left:1359px;top:698px;width:1px;height:56px;"></div>
<div class="ln" style="left:1396px;top:698px;width:1px;height:56px;"></div>
<div class="ln" style="left:1441px;top:698px;width:1px;height:56px;"></div>
<span class="m" style="left:399px;top:706.42px;font-size:10.67px;">1</span>
<span class="m" style="left:415px;top:706.42px;font-size:10.67px;">Иванов Иван</span>
<span class="m" style="left:415px;top:722.42px;font-size:10.67px;">Иванович, Главный</span>
<span class="m" style="left:415px;top:738.42px;font-size:10.67px;">механик</span>
<span class="m" style="left:539px;top:706.42px;font-size:10.67px;">2</span>
<span class="m" style="left:592px;top:706.42px;font-size:10.67px;">Я</span>
<span class="m" style="left:610px;top:706.42px;font-size:10.67px;">Я</span>
<span class="m" style="left:628px;top:706.42px;font-size:10.67px;">Я</span>
<span class="m" style="left:646px;top:706.42px;font-size:10.67px;">В</span>
<span class="m" style="left:664px;top:706.42px;font-size:10.67px;">В</span>
<span class="m" style="left:682px;top:706.42px;font-size:10.67px;">В</span>
<span class="m" style="left:700px;top:706.42px;font-size:10.67px;">Я</span>
<span class="m" style="left:718px;top:706.42px;font-size:10.67px;">Я</span>
<span class="m" style="left:736px;top:706.42px;font-size:10.67px;">Я</span>
<span class="m" style="left:754px;top:706.42px;font-size:10.67px;">Я</span>
<span class="m" style="left:772px;top:706.42px;font-size:10.67px;">В</span>
<span class="m" style="left:790px;top:706.42px;font-size:10.67px;">В</span>
<span class="m" style="left:808px;top:706.42px;font-size:10.67px;">Я</span>
<span class="m" style="left:826px;top:706.42px;font-size:10.67px;">Я</span>
<span class="m" style="left:844px;top:706.42px;font-size:10.67px;">Я</span>
<span class="m" style="left:862px;top:706.42px;font-size:10.67px;">Я</span>
<span class="m" style="left:880px;top:706.42px;font-size:10.67px;">Я</span>
<span class="m" style="left:898px;top:706.42px;font-size:10.67px;">В</span>
<span class="m" style="left:916px;top:706.42px;font-size:10.67px;">В</span>
<span class="m" style="left:934px;top:706.42px;font-size:10.67px;">Я</span>
<span class="m" style="left:952px;top:706.42px;font-size:10.67px;">Я</span>
<span class="m" style="left:970px;top:706.42px;font-size:10.67px;">Я</span>
<span class="m" style="left:988px;top:706.42px;font-size:10.67px;">Я</span>
<span class="m" style="left:1006px;top:706.42px;font-size:10.67px;">Я</span>
<span class="m" style="left:1024px;top:706.42px;font-size:10.67px;">В</span>
<span class="m" style="left:1042px;top:706.42px;font-size:10.67px;">В</span>
<span class="m" style="left:1060px;top:706.42px;font-size:10.67px;">Я</span>
<span class="m" style="left:1078px;top:706.42px;font-size:10.67px;">Я</span>
<span class="m" style="left:1096px;top:706.42px;font-size:10.67px;">Я</span>
<span class="m" style="left:1114px;top:706.42px;font-size:10.67px;">Я</span>
<span class="m" style="left:1130px;width:18px;text-align:center;top:706.42px;font-size:10.67px;letter-spacing:-0.5px;">21</span>
<span class="m" style="left:1149px;width:18px;text-align:center;top:706.42px;font-size:10.67px;">0</span>
<span class="m" style="left:1168px;width:20px;text-align:center;top:706.42px;font-size:10.67px;">0</span>
<span class="m" style="left:1189px;width:19px;text-align:center;top:706.42px;font-size:10.67px;">0</span>
<span class="m" style="left:1209px;width:20px;text-align:center;top:706.42px;font-size:10.67px;">9</span>
<span class="m" style="left:1230px;width:22px;text-align:center;top:706.42px;font-size:10.67px;">0</span>
<span class="m" style="left:1253px;width:22px;text-align:center;top:706.42px;font-size:10.67px;">0</span>
<span class="m" style="left:1276px;width:28px;text-align:center;top:706.42px;font-size:10.67px;">0</span>
<span class="m" style="left:1305px;width:29px;text-align:center;top:706.42px;font-size:10.67px;">0</span>
<span class="m" style="left:1335px;width:24px;text-align:center;top:706.42px;font-size:10.67px;">0</span>
<span class="m" style="left:1360px;width:36px;text-align:center;top:706.42px;font-size:10.67px;">30</span>
<span class="m" style="left:1396.5px;top:721.42px;font-size:10.67px;">167,00</span>
<div style="left:1092px;top:277px;width:283px;height:66px;background:#b4b4b4;box-shadow:inset 2px 2px 0 #fff,inset -1px -1px 0 #707070"></div>
<div style="left:1099px;top:284px;width:269px;height:52px;background:#fff"></div>
<div style="left:1100px;top:285px;width:268px;height:22px;background:linear-gradient(90deg,#9ab5d6,#b4cbe6 60%,#bcd2ea)"></div>
<div style="left:1100px;top:307px;width:268px;height:29px;background:#f0f0f0"></div>
<span class="t" style="left:1103px;top:290.500px;font-size:12px;color:#000">Предварительный просмотр</span>
<div style="left:1346px;top:288px;width:18px;height:16px;background:#c8504f"><svg style="left:6px;top:5px" width="7" height="7"><path d="M0.700 0.700L5.300 5.300M5.300 0.700L0.700 5.300" stroke="#fff" stroke-width="1.700"/></svg></div>
<div style="left:1154px;top:310px;width:1px;height:22px;background:#a0a0a0"></div>
<div style="left:1155px;top:310px;width:1px;height:22px;background:#fff"></div>
<div style="left:1185px;top:310px;width:1px;height:22px;background:#a0a0a0"></div>
<div style="left:1186px;top:310px;width:1px;height:22px;background:#fff"></div>
<div style="left:1239px;top:310px;width:1px;height:22px;background:#a0a0a0"></div>
<div style="left:1240px;top:310px;width:1px;height:22px;background:#fff"></div>
<div style="left:1304px;top:310px;width:1px;height:22px;background:#a0a0a0"></div>
<div style="left:1305px;top:310px;width:1px;height:22px;background:#fff"></div>
<div style="left:1334px;top:310px;width:1px;height:22px;background:#a0a0a0"></div>
<div style="left:1335px;top:310px;width:1px;height:22px;background:#fff"></div>
<svg style="left:1110px;top:314.500px" width="12" height="12"><path d="M1.500 0.500v11" stroke="#a0a0a0" stroke-width="2"/><path d="M10.500 0.500v11L4 6z" fill="#a0a0a0"/></svg>
<svg style="left:1135px;top:314.500px" width="9" height="12"><path d="M7.500 0.500v11L1 6z" fill="#a0a0a0"/></svg>
<svg style="left:1163px;top:313px" width="16" height="16"><path d="M1.100 1.200h6.300v8.500h-6.300z" fill="#fff" stroke="#000" stroke-width="1.200"/><path d="M5.400 3.100h5.600l3 3v7.600h-8.600z" fill="#fff" stroke="#000" stroke-width="1.200"/><path d="M11 3.100v3h3" fill="none" stroke="#000" stroke-width="1"/></svg>
<svg style="left:1197px;top:314.500px" width="9" height="12"><path d="M1 0.500v11L7.500 6z" fill="#a0a0a0"/></svg>
<svg style="left:1219px;top:314.500px" width="12" height="12"><path d="M0.500 0.500v11L7 6z" fill="#a0a0a0"/><path d="M9.500 0.500v11" stroke="#a0a0a0" stroke-width="2"/></svg>
<div style="left:1245px;top:311px;width:56px;height:22px;background:#fff;border:1px solid #7a7a7a"></div>
<span class="t" style="left:1249.500px;top:316.500px;font-size:11px;letter-spacing:-0.2px">100%</span>
<div style="left:1282px;top:313px;width:17px;height:18px;background:#e1e1e1;border:1px solid #adadad"><svg style="left:3px;top:5px" width="10" height="7"><path d="M1 1.500L5 5.500L9 1.500" fill="none" stroke="#444" stroke-width="1.200"/></svg></div>
<svg style="left:1310px;top:312px" width="18" height="18" viewBox="0 0 18 18"><path d="M2.500 11.500V1.600h7v9.900" fill="#fff" stroke="#000" stroke-width="1.200"/><path d="M1 11.500h13" stroke="#000" stroke-width="1.100"/><path d="M2.600 1.800L6.800 5.300V15.900L2.600 11.500z" fill="#a0a000" stroke="#000" stroke-width="0.900"/><path d="M11.100 6.500L15.200 2.900V4.900h2v3.100h-2v2z" fill="#0000a0"/></svg>
<svg style="left:1341px;top:313px" width="18" height="16" viewBox="0 0 18 16"><path d="M13.300 8.700L15.400 6.300L17 7.500v2.800l-3.700 4.600z" fill="#8c8c8c" stroke="#000" stroke-width="1"/><path d="M0.900 8.700L3.300 6.900H15.400L13.300 8.700z" fill="#f4f4f4" stroke="#000" stroke-width="1"/><rect x="0.500" y="8.300" width="13.200" height="7" fill="#000"/><rect x="1.900" y="10.300" width="10.500" height="1.600" fill="#e4e4e4"/><rect x="2.100" y="13.200" width="10.100" height="0.900" fill="#f4f4f4"/><path d="M3.700 7L6 1.200h8.800L13 7z" fill="#fff" stroke="#000" stroke-width="1.100"/><path d="M7.500 3.500h4.400M6.300 5.400h4.700" stroke="#000" stroke-width="0.900"/></svg>
</body></html>
